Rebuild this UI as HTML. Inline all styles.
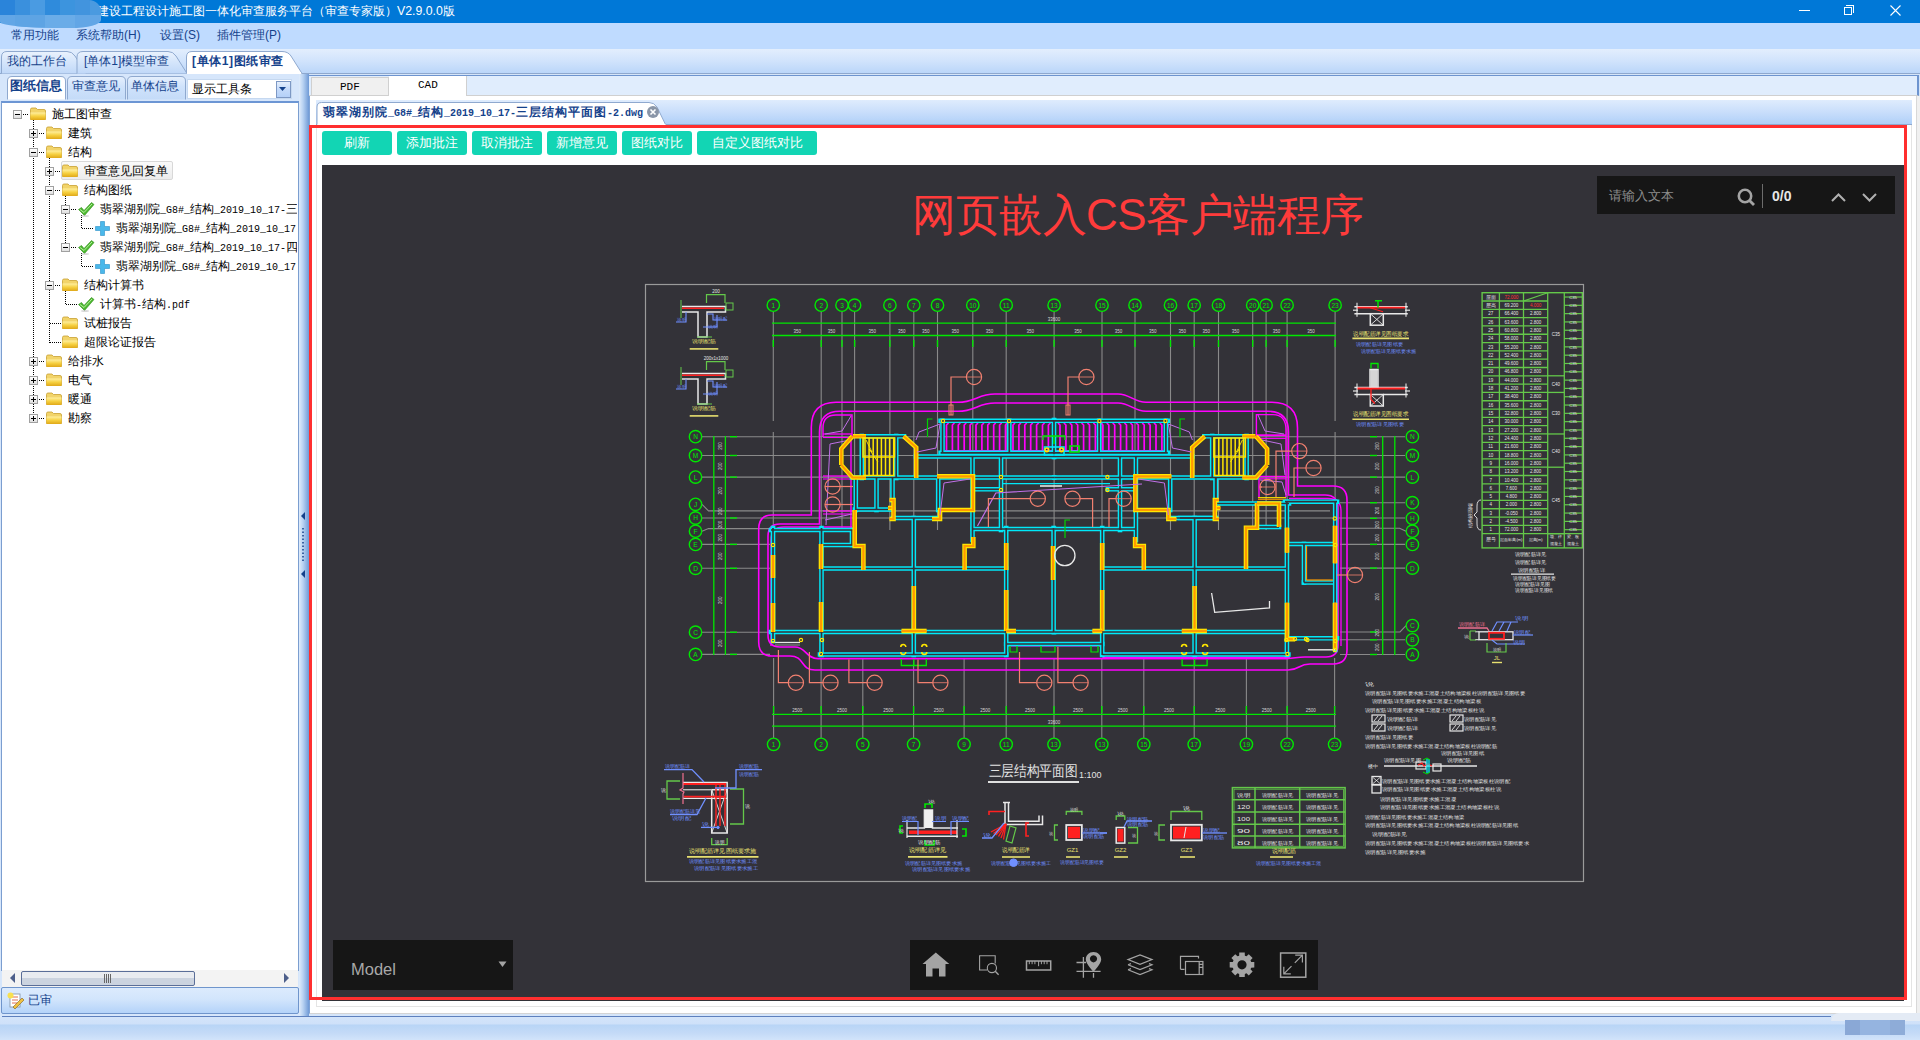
<!DOCTYPE html>
<html><head><meta charset="utf-8">
<style>
*{margin:0;padding:0;box-sizing:border-box}
html,body{width:1920px;height:1040px;overflow:hidden;background:#d5e5f9;font-family:"Liberation Sans",sans-serif;font-size:12px;color:#000}
.a{position:absolute}
.t{position:absolute;white-space:nowrap;line-height:12px}
.bl{color:#15428b}
#title{left:0;top:0;width:1920px;height:23px;background:#0078d7;color:#fff}
#menu{left:0;top:23px;width:1920px;height:26px;background:#bfdbff}
#tabbar{left:0;top:49px;width:1920px;height:25px;background:linear-gradient(#e3eefd,#d2e4fc 45%,#b9d5f9)}
.row{position:absolute;height:19px;left:0;width:296px}
.exp{position:absolute;width:9px;height:9px;border:1px solid #a0a0a0;background:linear-gradient(#fff,#e0e0e0);top:5px}
.exp:before{content:"";position:absolute;left:1px;top:3px;width:5px;height:1px;background:#000}
.exp.p:after{content:"";position:absolute;left:3px;top:1px;width:1px;height:5px;background:#000}
.fold{position:absolute;top:1px;width:16px;height:13px}
.lbl{position:absolute;top:3px;white-space:nowrap;line-height:12px;font-size:12px}
.btn{position:absolute;top:131px;height:24px;background:#12d5b4;border-radius:3px;color:#fff;font-size:13px;line-height:24px;text-align:center}
</style></head>
<body>
<!-- title bar -->
<div id="title" class="a">
  <div class="t" style="left:97px;top:5px;font-size:12.3px;letter-spacing:0px">建设工程设计施工图一体化审查服务平台（审查专家版）V2.9.0.0版</div>
  <div class="a" style="left:0;top:0;width:101px;height:28px;border-radius:0 12px 30px 60px / 0 12px 8px 6px;overflow:hidden;z-index:2">
    <div class="a" style="left:0;top:0;width:15px;height:15px;background:#2a84da"></div>
    <div class="a" style="left:15px;top:0;width:15px;height:15px;background:#3a90dd"></div>
    <div class="a" style="left:30px;top:0;width:15px;height:15px;background:#4a9be2"></div>
    <div class="a" style="left:45px;top:0;width:15px;height:15px;background:#2f8bdc"></div>
    <div class="a" style="left:60px;top:0;width:15px;height:15px;background:#3c94de"></div>
    <div class="a" style="left:75px;top:0;width:15px;height:15px;background:#4294de"></div>
    <div class="a" style="left:90px;top:0;width:11px;height:15px;background:#4a9ae0"></div>
    <div class="a" style="left:0;top:15px;width:101px;height:13px;background:#62a6e6"></div>
    <div class="a" style="left:15px;top:15px;width:30px;height:13px;background:#5ea4e4"></div>
    <div class="a" style="left:45px;top:15px;width:30px;height:13px;background:#6aace8"></div>
  </div>
  <!-- window controls -->
  <div class="a" style="left:1799px;top:10px;width:11px;height:1px;background:#fff"></div>
  <div class="a" style="left:1844px;top:7px;width:8px;height:8px;border:1px solid #fff"></div>
  <div class="a" style="left:1846px;top:5px;width:8px;height:8px;border-top:1px solid #fff;border-right:1px solid #fff"></div>
  <svg class="a" style="left:1890px;top:5px" width="11" height="11"><path d="M0.5 0.5L10.5 10.5M10.5 0.5L0.5 10.5" stroke="#fff" stroke-width="1.1"/></svg>
</div>
<!-- menu -->
<div id="menu" class="a">
  <div class="t bl" style="left:11px;top:6px">常用功能</div>
  <div class="t bl" style="left:76px;top:6px">系统帮助(H)</div>
  <div class="t bl" style="left:160px;top:6px">设置(S)</div>
  <div class="t bl" style="left:217px;top:6px">插件管理(P)</div>
</div>
<div id="tabbar" class="a"></div>
<div class="a" style="left:0;top:73px;width:1920px;height:1px;background:#8ea8ce"></div>
<svg class="a" style="left:0;top:49px" width="310" height="26">
  <defs><linearGradient id="tg" x1="0" y1="0" x2="0" y2="1"><stop offset="0" stop-color="#eaf2fd"/><stop offset="0.5" stop-color="#d4e5fb"/><stop offset="1" stop-color="#c0d8f8"/></linearGradient></defs>
  <path d="M1.5 24.5V8Q1.5 2.5 7 2.5H67Q72 2.5 75 7L86 24.5" fill="url(#tg)" stroke="#8fa9cf"/>
  <path d="M77 24.5V8Q77 2.5 83 2.5H168Q173 2.5 176 7L187 24.5" fill="url(#tg)" stroke="#8fa9cf"/>
  <path d="M186.5 24.5V8Q186.5 2.5 192 2.5H282Q288 2.5 291 7L302 24.5" fill="#fff" stroke="#8fa9cf"/>
  <rect x="187" y="23" width="114" height="3" fill="#fff"/>
</svg>
<div class="t bl" style="left:7px;top:55px">我的工作台</div>
<div class="t bl" style="left:84px;top:55px">[单体1]模型审查</div>
<div class="t bl" style="left:192px;top:55px;font-weight:bold;letter-spacing:0.6px">[单体1]图纸审查</div>

<!-- LEFT PANEL -->
<div class="a" style="left:0;top:74px;width:299px;height:943px;background:#d6e6fb"></div>
<svg class="a" style="left:0;top:74px" width="300" height="30">
  <path d="M7.5 25.5V7Q7.5 2.5 12 2.5H61Q65.5 2.5 65.5 7V25.5" fill="#fff" stroke="#8fa9cf"/>
  <path d="M67.5 25.5V7Q67.5 2.5 72 2.5H121Q125.5 2.5 125.5 7V25.5" fill="url(#tg2)" stroke="#8fa9cf"/>
  <path d="M127.5 25.5V7Q127.5 2.5 132 2.5H181Q185.5 2.5 185.5 7V25.5" fill="url(#tg2)" stroke="#8fa9cf"/>
  <defs><linearGradient id="tg2" x1="0" y1="0" x2="0" y2="1"><stop offset="0" stop-color="#e6f0fd"/><stop offset="0.45" stop-color="#cfe2fb"/><stop offset="1" stop-color="#c4dbf8"/></linearGradient></defs>
</svg>
<div class="t bl" style="left:10px;top:80px;font-weight:bold;font-size:12.5px">图纸信息</div>
<div class="t bl" style="left:72px;top:80px">审查意见</div>
<div class="t bl" style="left:131px;top:80px">单体信息</div>
<div class="a" style="left:187px;top:79px;width:105px;height:20px;background:#fff;border:1px solid #c5d8f0"></div>
<div class="t" style="left:192px;top:83px">显示工具条</div>
<div class="a" style="left:276px;top:81px;width:15px;height:17px;border:1px solid #7d98c4;background:linear-gradient(#e4eefc,#c4dafa 50%,#b4d0f8)"></div>
<svg class="a" style="left:279px;top:87px" width="9" height="5"><path d="M0 0H7L3.5 4Z" fill="#15428b"/></svg>
<!-- tree -->
<div class="a" style="left:1px;top:101px;width:298px;height:870px;background:#fff;border:1px solid #7b9ed0;border-top:2px solid #6c96d4;border-bottom:none"></div>
<div id="tree" class="a" style="left:0;top:104px;width:297px;height:866px;overflow:hidden"><div class="a" style="left:61px;top:57px;width:112px;height:19px;border:1px solid #d8d8d8;border-radius:2px;background:linear-gradient(#fafafa,#ececec)"></div><svg class="a" style="left:0;top:0" width="297" height="400"><defs><linearGradient id="fg" x1="0" y1="0" x2="0" y2="1"><stop offset="0" stop-color="#fff0a0"/><stop offset="0.5" stop-color="#f6d040"/><stop offset="1" stop-color="#e0a818"/></linearGradient></defs><path d="M33.5 16V315" stroke="#000" stroke-width="1" stroke-dasharray="1 1" shape-rendering="crispEdges"/><path d="M49.5 54V239" stroke="#000" stroke-width="1" stroke-dasharray="1 1" shape-rendering="crispEdges"/><path d="M65.5 92V144" stroke="#000" stroke-width="1" stroke-dasharray="1 1" shape-rendering="crispEdges"/><path d="M81.5 111V125" stroke="#000" stroke-width="1" stroke-dasharray="1 1" shape-rendering="crispEdges"/><path d="M81.5 149V163" stroke="#000" stroke-width="1" stroke-dasharray="1 1" shape-rendering="crispEdges"/><path d="M65.5 187V201" stroke="#000" stroke-width="1" stroke-dasharray="1 1" shape-rendering="crispEdges"/><path d="M23 10.5H29" stroke="#000" stroke-width="1" stroke-dasharray="1 1" shape-rendering="crispEdges"/><path d="M39 29.5H45" stroke="#000" stroke-width="1" stroke-dasharray="1 1" shape-rendering="crispEdges"/><path d="M39 48.5H45" stroke="#000" stroke-width="1" stroke-dasharray="1 1" shape-rendering="crispEdges"/><path d="M55 67.5H61" stroke="#000" stroke-width="1" stroke-dasharray="1 1" shape-rendering="crispEdges"/><path d="M55 86.5H61" stroke="#000" stroke-width="1" stroke-dasharray="1 1" shape-rendering="crispEdges"/><path d="M71 105.5H77" stroke="#000" stroke-width="1" stroke-dasharray="1 1" shape-rendering="crispEdges"/><path d="M82 124.5H93" stroke="#000" stroke-width="1" stroke-dasharray="1 1" shape-rendering="crispEdges"/><path d="M71 143.5H77" stroke="#000" stroke-width="1" stroke-dasharray="1 1" shape-rendering="crispEdges"/><path d="M82 162.5H93" stroke="#000" stroke-width="1" stroke-dasharray="1 1" shape-rendering="crispEdges"/><path d="M55 181.5H61" stroke="#000" stroke-width="1" stroke-dasharray="1 1" shape-rendering="crispEdges"/><path d="M66 200.5H77" stroke="#000" stroke-width="1" stroke-dasharray="1 1" shape-rendering="crispEdges"/><path d="M50 219.5H61" stroke="#000" stroke-width="1" stroke-dasharray="1 1" shape-rendering="crispEdges"/><path d="M50 238.5H61" stroke="#000" stroke-width="1" stroke-dasharray="1 1" shape-rendering="crispEdges"/><path d="M39 257.5H45" stroke="#000" stroke-width="1" stroke-dasharray="1 1" shape-rendering="crispEdges"/><path d="M39 276.5H45" stroke="#000" stroke-width="1" stroke-dasharray="1 1" shape-rendering="crispEdges"/><path d="M39 295.5H45" stroke="#000" stroke-width="1" stroke-dasharray="1 1" shape-rendering="crispEdges"/><path d="M39 314.5H45" stroke="#000" stroke-width="1" stroke-dasharray="1 1" shape-rendering="crispEdges"/><g transform="translate(30,3)"><path d="M0.5 2.5Q0.5 1 2 1H6L7.5 2.5H14Q15.5 2.5 15.5 4V12.5H0.5Z" fill="#f2d46a" stroke="#c8a030" stroke-width="0.8"/><path d="M0.5 5.5H15.5V12Q15.5 13 14.5 13H1.5Q0.5 13 0.5 12Z" fill="url(#fg)"/></g><g transform="translate(46,22)"><path d="M0.5 2.5Q0.5 1 2 1H6L7.5 2.5H14Q15.5 2.5 15.5 4V12.5H0.5Z" fill="#f2d46a" stroke="#c8a030" stroke-width="0.8"/><path d="M0.5 5.5H15.5V12Q15.5 13 14.5 13H1.5Q0.5 13 0.5 12Z" fill="url(#fg)"/></g><g transform="translate(46,41)"><path d="M0.5 2.5Q0.5 1 2 1H6L7.5 2.5H14Q15.5 2.5 15.5 4V12.5H0.5Z" fill="#f2d46a" stroke="#c8a030" stroke-width="0.8"/><path d="M0.5 5.5H15.5V12Q15.5 13 14.5 13H1.5Q0.5 13 0.5 12Z" fill="url(#fg)"/></g><g transform="translate(62,60)"><path d="M0.5 2.5Q0.5 1 2 1H6L7.5 2.5H14Q15.5 2.5 15.5 4V12.5H0.5Z" fill="#f2d46a" stroke="#c8a030" stroke-width="0.8"/><path d="M0.5 5.5H15.5V12Q15.5 13 14.5 13H1.5Q0.5 13 0.5 12Z" fill="url(#fg)"/></g><g transform="translate(62,79)"><path d="M0.5 2.5Q0.5 1 2 1H6L7.5 2.5H14Q15.5 2.5 15.5 4V12.5H0.5Z" fill="#f2d46a" stroke="#c8a030" stroke-width="0.8"/><path d="M0.5 5.5H15.5V12Q15.5 13 14.5 13H1.5Q0.5 13 0.5 12Z" fill="url(#fg)"/></g><g transform="translate(78,97)"><path d="M0.5 8.5L3.5 6.5L6 9.5L13.5 1.5L16 3.5L6.5 14.5Z" fill="#4cb830" stroke="#2e8a18" stroke-width="0.6"/><path d="M2 8.5L6 11.5L14 3" stroke="#b8f0a0" stroke-width="1" fill="none"/><ellipse cx="7" cy="15" rx="4" ry="1" fill="#c0c0c0" opacity="0.6"/></g><g transform="translate(95,117)"><path d="M5.5 0.5H9.5V5.5H14.5V9.5H9.5V14.5H5.5V9.5H0.5V5.5H5.5Z" fill="#4ab8ea" stroke="#2a90c8" stroke-width="0.6"/></g><g transform="translate(78,135)"><path d="M0.5 8.5L3.5 6.5L6 9.5L13.5 1.5L16 3.5L6.5 14.5Z" fill="#4cb830" stroke="#2e8a18" stroke-width="0.6"/><path d="M2 8.5L6 11.5L14 3" stroke="#b8f0a0" stroke-width="1" fill="none"/><ellipse cx="7" cy="15" rx="4" ry="1" fill="#c0c0c0" opacity="0.6"/></g><g transform="translate(95,155)"><path d="M5.5 0.5H9.5V5.5H14.5V9.5H9.5V14.5H5.5V9.5H0.5V5.5H5.5Z" fill="#4ab8ea" stroke="#2a90c8" stroke-width="0.6"/></g><g transform="translate(62,174)"><path d="M0.5 2.5Q0.5 1 2 1H6L7.5 2.5H14Q15.5 2.5 15.5 4V12.5H0.5Z" fill="#f2d46a" stroke="#c8a030" stroke-width="0.8"/><path d="M0.5 5.5H15.5V12Q15.5 13 14.5 13H1.5Q0.5 13 0.5 12Z" fill="url(#fg)"/></g><g transform="translate(78,192)"><path d="M0.5 8.5L3.5 6.5L6 9.5L13.5 1.5L16 3.5L6.5 14.5Z" fill="#4cb830" stroke="#2e8a18" stroke-width="0.6"/><path d="M2 8.5L6 11.5L14 3" stroke="#b8f0a0" stroke-width="1" fill="none"/><ellipse cx="7" cy="15" rx="4" ry="1" fill="#c0c0c0" opacity="0.6"/></g><g transform="translate(62,212)"><path d="M0.5 2.5Q0.5 1 2 1H6L7.5 2.5H14Q15.5 2.5 15.5 4V12.5H0.5Z" fill="#f2d46a" stroke="#c8a030" stroke-width="0.8"/><path d="M0.5 5.5H15.5V12Q15.5 13 14.5 13H1.5Q0.5 13 0.5 12Z" fill="url(#fg)"/></g><g transform="translate(62,231)"><path d="M0.5 2.5Q0.5 1 2 1H6L7.5 2.5H14Q15.5 2.5 15.5 4V12.5H0.5Z" fill="#f2d46a" stroke="#c8a030" stroke-width="0.8"/><path d="M0.5 5.5H15.5V12Q15.5 13 14.5 13H1.5Q0.5 13 0.5 12Z" fill="url(#fg)"/></g><g transform="translate(46,250)"><path d="M0.5 2.5Q0.5 1 2 1H6L7.5 2.5H14Q15.5 2.5 15.5 4V12.5H0.5Z" fill="#f2d46a" stroke="#c8a030" stroke-width="0.8"/><path d="M0.5 5.5H15.5V12Q15.5 13 14.5 13H1.5Q0.5 13 0.5 12Z" fill="url(#fg)"/></g><g transform="translate(46,269)"><path d="M0.5 2.5Q0.5 1 2 1H6L7.5 2.5H14Q15.5 2.5 15.5 4V12.5H0.5Z" fill="#f2d46a" stroke="#c8a030" stroke-width="0.8"/><path d="M0.5 5.5H15.5V12Q15.5 13 14.5 13H1.5Q0.5 13 0.5 12Z" fill="url(#fg)"/></g><g transform="translate(46,288)"><path d="M0.5 2.5Q0.5 1 2 1H6L7.5 2.5H14Q15.5 2.5 15.5 4V12.5H0.5Z" fill="#f2d46a" stroke="#c8a030" stroke-width="0.8"/><path d="M0.5 5.5H15.5V12Q15.5 13 14.5 13H1.5Q0.5 13 0.5 12Z" fill="url(#fg)"/></g><g transform="translate(46,307)"><path d="M0.5 2.5Q0.5 1 2 1H6L7.5 2.5H14Q15.5 2.5 15.5 4V12.5H0.5Z" fill="#f2d46a" stroke="#c8a030" stroke-width="0.8"/><path d="M0.5 5.5H15.5V12Q15.5 13 14.5 13H1.5Q0.5 13 0.5 12Z" fill="url(#fg)"/></g></svg>
<div class="exp" style="left:13px;top:6px"></div>
<div class="t" style="left:52px;top:4px">施工图审查</div>
<div class="exp p" style="left:29px;top:25px"></div>
<div class="t" style="left:68px;top:23px">建筑</div>
<div class="exp" style="left:29px;top:44px"></div>
<div class="t" style="left:68px;top:42px">结构</div>
<div class="exp p" style="left:45px;top:63px"></div>
<div class="t" style="left:84px;top:61px">审查意见回复单</div>
<div class="exp" style="left:45px;top:82px"></div>
<div class="t" style="left:84px;top:80px">结构图纸</div>
<div class="exp" style="left:61px;top:101px"></div>
<div class="t" style="left:100px;top:99px">翡翠湖别院<span style="font-family:Liberation Mono,monospace;font-size:10px">_G8#_</span>结构<span style="font-family:Liberation Mono,monospace;font-size:10px">_2019_10_17-</span>三层结构平面图<span style="font-family:Liberation Mono,monospace;font-size:10px">-2.dwg</span></div>
<div class="t" style="left:116px;top:118px">翡翠湖别院<span style="font-family:Liberation Mono,monospace;font-size:10px">_G8#_</span>结构<span style="font-family:Liberation Mono,monospace;font-size:10px">_2019_10_17-</span>三层结构平面图<span style="font-family:Liberation Mono,monospace;font-size:10px">-2</span></div>
<div class="exp" style="left:61px;top:139px"></div>
<div class="t" style="left:100px;top:137px">翡翠湖别院<span style="font-family:Liberation Mono,monospace;font-size:10px">_G8#_</span>结构<span style="font-family:Liberation Mono,monospace;font-size:10px">_2019_10_17-</span>四层结构平面图</div>
<div class="t" style="left:116px;top:156px">翡翠湖别院<span style="font-family:Liberation Mono,monospace;font-size:10px">_G8#_</span>结构<span style="font-family:Liberation Mono,monospace;font-size:10px">_2019_10_17-</span>四层结构平面图</div>
<div class="exp" style="left:45px;top:177px"></div>
<div class="t" style="left:84px;top:175px">结构计算书</div>
<div class="t" style="left:100px;top:194px">计算书<span style="font-family:Liberation Mono,monospace;font-size:10px">-</span>结构<span style="font-family:Liberation Mono,monospace;font-size:10px">.pdf</span></div>
<div class="t" style="left:84px;top:213px">试桩报告</div>
<div class="t" style="left:84px;top:232px">超限论证报告</div>
<div class="exp p" style="left:29px;top:253px"></div>
<div class="t" style="left:68px;top:251px">给排水</div>
<div class="exp p" style="left:29px;top:272px"></div>
<div class="t" style="left:68px;top:270px">电气</div>
<div class="exp p" style="left:29px;top:291px"></div>
<div class="t" style="left:68px;top:289px">暖通</div>
<div class="exp p" style="left:29px;top:310px"></div>
<div class="t" style="left:68px;top:308px">勘察</div></div>
<!-- scrollbar -->
<div class="a" style="left:2px;top:970px;width:296px;height:17px;background:#f3f3f3"></div>
<svg class="a" style="left:9px;top:973px" width="8" height="12"><path d="M6 0V10L1 5Z" fill="#4d5f8a"/></svg>
<svg class="a" style="left:283px;top:973px" width="8" height="12"><path d="M1 0V10L6 5Z" fill="#4d5f8a"/></svg>
<div class="a" style="left:21px;top:971px;width:174px;height:15px;border:1px solid #5a6e98;border-radius:2px;background:linear-gradient(#e8ebf0 50%,#cbd3df 50%)"></div>
<div class="a" style="left:104px;top:974px;width:1px;height:9px;background:#666"></div>
<div class="a" style="left:106px;top:974px;width:1px;height:9px;background:#666"></div>
<div class="a" style="left:108px;top:974px;width:1px;height:9px;background:#666"></div>
<div class="a" style="left:110px;top:974px;width:1px;height:9px;background:#666"></div>
<!-- 已审 -->
<div class="a" style="left:1px;top:987px;width:298px;height:27px;background:linear-gradient(#dcebfd,#d2e5fc 45%,#b4d3f9);border:1px solid #6f95cc;border-radius:2px"></div>
<svg class="a" style="left:7px;top:992px" width="17" height="17">
  <rect x="3" y="2" width="10" height="13" fill="#fff" stroke="#8090a0" stroke-width="0.8"/>
  <path d="M5 5H11M5 8H11M5 11H10" stroke="#e07050" stroke-width="1"/>
  <path d="M6 15L15 6L17 8L8 17Z" fill="#f0c040" stroke="#806020" stroke-width="0.6"/>
  <circle cx="3.5" cy="3.5" r="3" fill="#f8e050"/>
</svg>
<div class="t bl" style="left:28px;top:994px">已审</div>
<!-- splitter -->
<div class="a" style="left:299px;top:74px;width:10px;height:942px;background:linear-gradient(90deg,#e0ecfb,#b8d2f2 40%,#6f9ad6)"></div>
<svg class="a" style="left:300px;top:510px" width="6" height="70">
  <path d="M5 2V10L1 6Z" fill="#15428b"/>
  <path d="M3 18V52" stroke="#15428b" stroke-width="1.5" stroke-dasharray="1.5 2"/>
  <path d="M5 60V68L1 64Z" fill="#15428b"/>
</svg>

<!-- RIGHT PANEL -->
<div class="a" style="left:309px;top:75px;width:1609px;height:939px;background:#fff;border-left:1px solid #7fa3d6;border-bottom:1px solid #d4d4d4"></div>
<div class="a" style="left:309px;top:75px;width:1610px;height:21px;background:#e0edfd;border-top:1px solid #6d94cf;border-right:2px solid #6d94cf;border-bottom:1px solid #d0d0d0"></div>
<div class="a" style="left:311px;top:77px;width:78px;height:18px;background:#f0f0f0;border:1px solid #d0d0d0;border-bottom:none"></div>
<div class="a" style="left:389px;top:76px;width:78px;height:20px;background:#fff;border-right:1px solid #d0d0d0"></div>
<div class="t" style="left:340px;top:81px;font-family:'Liberation Mono',monospace;font-size:11px">PDF</div>
<div class="t" style="left:418px;top:79px;font-family:'Liberation Mono',monospace;font-size:11px">CAD</div>
<div class="a" style="left:1916px;top:96px;width:1px;height:920px;background:#d8d8d8"></div>
<!-- file tab strip -->
<div class="a" style="left:316px;top:100px;width:1596px;height:25px;background:linear-gradient(#dfecfd,#c9defb 50%,#b0d0f8);border-bottom:1px solid #8fa9cf"></div>
<svg class="a" style="left:316px;top:101px" width="360" height="25">
  <path d="M1 24.5V6Q1 1.5 5.5 1.5H333Q338 1.5 341 6L350 24.5" fill="#fff" stroke="#8fa9cf"/>
  <rect x="1.5" y="23" width="348" height="3" fill="#fff"/>
</svg>
<div class="t bl" style="left:323px;top:106px;font-weight:bold;letter-spacing:1px">翡翠湖别院<span style="font-family:Liberation Mono,monospace;font-size:10px;letter-spacing:0">_G8#_</span>结构<span style="font-family:Liberation Mono,monospace;font-size:10px;letter-spacing:0">_2019_10_17-</span>三层结构平面图<span style="font-family:Liberation Mono,monospace;font-size:10px;letter-spacing:0">-2.dwg</span></div>
<svg class="a" style="left:646px;top:105px" width="14" height="14"><circle cx="7" cy="7" r="6" fill="#8a96a8"/><path d="M4.5 4.5L9.5 9.5M9.5 4.5L4.5 9.5" stroke="#fff" stroke-width="1.6"/></svg>
<!-- inner frame lines -->
<div class="a" style="left:316px;top:125px;width:1596px;height:882px;border:1px solid #e4e4e4;border-top:none"></div>
<!-- buttons -->
<div class="btn" style="left:322px;width:70px">刷新</div>
<div class="btn" style="left:397px;width:70px">添加批注</div>
<div class="btn" style="left:472px;width:70px">取消批注</div>
<div class="btn" style="left:547px;width:70px">新增意见</div>
<div class="btn" style="left:622px;width:70px">图纸对比</div>
<div class="btn" style="left:697px;width:120px">自定义图纸对比</div>
<!-- canvas -->
<div id="canvas" class="a" style="left:322px;top:165px;width:1582px;height:836px;background:#333238;overflow:hidden"><div class="a" style="left:-322px;top:-165px;width:1920px;height:1040px">
<svg class="a" style="left:0;top:0" width="1920" height="1040" font-family="Liberation Sans, sans-serif"><rect x="645.5" y="284.5" width="938" height="597" stroke="#9a9a9a" stroke-width="1.2" fill="none"/>
<path d="M773.3 311.5L773.3 421" stroke="#8a8a8a" stroke-width="1.1"/>
<path d="M773.3 432L773.3 530" stroke="#8a8a8a" stroke-width="1.1"/>
<path d="M821.2 311.5L821.2 530" stroke="#8a8a8a" stroke-width="1.1"/>
<path d="M842 311.5L842 530" stroke="#8a8a8a" stroke-width="1.1"/>
<path d="M854.6 311.5L854.6 530" stroke="#8a8a8a" stroke-width="1.1"/>
<path d="M889.9 311.5L889.9 530" stroke="#8a8a8a" stroke-width="1.1"/>
<path d="M913.8 311.5L913.8 530" stroke="#8a8a8a" stroke-width="1.1"/>
<path d="M937.5 311.5L937.5 530" stroke="#8a8a8a" stroke-width="1.1"/>
<path d="M972.8 311.5L972.8 530" stroke="#8a8a8a" stroke-width="1.1"/>
<path d="M1006.2 311.5L1006.2 530" stroke="#8a8a8a" stroke-width="1.1"/>
<path d="M1054.1 311.5L1054.1 530" stroke="#8a8a8a" stroke-width="1.1"/>
<path d="M1102 311.5L1102 530" stroke="#8a8a8a" stroke-width="1.1"/>
<path d="M1135 311.5L1135 530" stroke="#8a8a8a" stroke-width="1.1"/>
<path d="M1170.5 311.5L1170.5 530" stroke="#8a8a8a" stroke-width="1.1"/>
<path d="M1194.2 311.5L1194.2 530" stroke="#8a8a8a" stroke-width="1.1"/>
<path d="M1218.5 311.5L1218.5 530" stroke="#8a8a8a" stroke-width="1.1"/>
<path d="M1252.7 311.5L1252.7 530" stroke="#8a8a8a" stroke-width="1.1"/>
<path d="M1266.1 311.5L1266.1 530" stroke="#8a8a8a" stroke-width="1.1"/>
<path d="M1287.1 311.5L1287.1 530" stroke="#8a8a8a" stroke-width="1.1"/>
<path d="M1335.1 311.5L1335.1 421" stroke="#8a8a8a" stroke-width="1.1"/>
<path d="M1335.1 432L1335.1 530" stroke="#8a8a8a" stroke-width="1.1"/>
<path d="M773.6 658L773.6 738" stroke="#8a8a8a" stroke-width="1.1"/>
<path d="M821.1 658L821.1 738" stroke="#8a8a8a" stroke-width="1.1"/>
<path d="M862.8 658L862.8 738" stroke="#8a8a8a" stroke-width="1.1"/>
<path d="M913.6 658L913.6 738" stroke="#8a8a8a" stroke-width="1.1"/>
<path d="M964.1 658L964.1 738" stroke="#8a8a8a" stroke-width="1.1"/>
<path d="M1006.2 658L1006.2 738" stroke="#8a8a8a" stroke-width="1.1"/>
<path d="M1054 658L1054 738" stroke="#8a8a8a" stroke-width="1.1"/>
<path d="M1101.8 658L1101.8 738" stroke="#8a8a8a" stroke-width="1.1"/>
<path d="M1143.8 658L1143.8 738" stroke="#8a8a8a" stroke-width="1.1"/>
<path d="M1194.2 658L1194.2 738" stroke="#8a8a8a" stroke-width="1.1"/>
<path d="M1246.4 658L1246.4 738" stroke="#8a8a8a" stroke-width="1.1"/>
<path d="M1287.1 658L1287.1 738" stroke="#8a8a8a" stroke-width="1.1"/>
<path d="M1334.6 658L1334.6 738" stroke="#8a8a8a" stroke-width="1.1"/>
<path d="M702 436.7L1405 436.7" stroke="#8a8a8a" stroke-width="1.1"/>
<path d="M702 455.5L1405 455.5" stroke="#8a8a8a" stroke-width="1.1"/>
<path d="M702 477.1L1405 477.1" stroke="#8a8a8a" stroke-width="1.1"/>
<path d="M702 504.3L708.5 510.9H1330" stroke="#8a8a8a" stroke-width="1.1" fill="none"/>
<path d="M702 518L1405 518" stroke="#8a8a8a" stroke-width="1.1"/>
<path d="M702 531.2L708.5 528.6H770" stroke="#8a8a8a" stroke-width="1.1" fill="none"/>
<path d="M702 544.4L770 544.4" stroke="#8a8a8a" stroke-width="1.1"/>
<path d="M702 568.3L770 568.3" stroke="#8a8a8a" stroke-width="1.1"/>
<path d="M702 632.2L770 632.2" stroke="#8a8a8a" stroke-width="1.1"/>
<path d="M702 654.4L770 654.4" stroke="#8a8a8a" stroke-width="1.1"/>
<path d="M1340 502.7L1405 502.7" stroke="#8a8a8a" stroke-width="1.1"/>
<path d="M1340 528.2H1399.7L1406 531.2" stroke="#8a8a8a" stroke-width="1.1" fill="none"/>
<path d="M1340 632H1400L1406 625.6" stroke="#8a8a8a" stroke-width="1.1" fill="none"/>
<path d="M1340 544.4L1405 544.4" stroke="#8a8a8a" stroke-width="1.1"/>
<path d="M1340 568.1L1405 568.1" stroke="#8a8a8a" stroke-width="1.1"/>
<path d="M1340 639.8L1405 639.8" stroke="#8a8a8a" stroke-width="1.1"/>
<path d="M1340 654.5L1405 654.5" stroke="#8a8a8a" stroke-width="1.1"/>
<circle cx="773.3" cy="305.2" r="6.2" stroke="#00e800" stroke-width="1.4" fill="none"/>
<text x="773.3" y="307.6" fill="#00e800" font-size="6.5" text-anchor="middle">1</text>
<circle cx="821.2" cy="305.2" r="6.2" stroke="#00e800" stroke-width="1.4" fill="none"/>
<text x="821.2" y="307.6" fill="#00e800" font-size="6.5" text-anchor="middle">2</text>
<circle cx="842" cy="305.2" r="6.2" stroke="#00e800" stroke-width="1.4" fill="none"/>
<text x="842" y="307.6" fill="#00e800" font-size="6.5" text-anchor="middle">3</text>
<circle cx="854.6" cy="305.2" r="6.2" stroke="#00e800" stroke-width="1.4" fill="none"/>
<text x="854.6" y="307.6" fill="#00e800" font-size="6.5" text-anchor="middle">4</text>
<circle cx="889.9" cy="305.2" r="6.2" stroke="#00e800" stroke-width="1.4" fill="none"/>
<text x="889.9" y="307.6" fill="#00e800" font-size="6.5" text-anchor="middle">6</text>
<circle cx="913.8" cy="305.2" r="6.2" stroke="#00e800" stroke-width="1.4" fill="none"/>
<text x="913.8" y="307.6" fill="#00e800" font-size="6.5" text-anchor="middle">7</text>
<circle cx="937.5" cy="305.2" r="6.2" stroke="#00e800" stroke-width="1.4" fill="none"/>
<text x="937.5" y="307.6" fill="#00e800" font-size="6.5" text-anchor="middle">8</text>
<circle cx="972.8" cy="305.2" r="6.2" stroke="#00e800" stroke-width="1.4" fill="none"/>
<text x="972.8" y="307.6" fill="#00e800" font-size="6.5" text-anchor="middle">10</text>
<circle cx="1006.2" cy="305.2" r="6.2" stroke="#00e800" stroke-width="1.4" fill="none"/>
<text x="1006.2" y="307.6" fill="#00e800" font-size="6.5" text-anchor="middle">11</text>
<circle cx="1054.1" cy="305.2" r="6.2" stroke="#00e800" stroke-width="1.4" fill="none"/>
<text x="1054.1" y="307.6" fill="#00e800" font-size="6.5" text-anchor="middle">13</text>
<circle cx="1102" cy="305.2" r="6.2" stroke="#00e800" stroke-width="1.4" fill="none"/>
<text x="1102" y="307.6" fill="#00e800" font-size="6.5" text-anchor="middle">15</text>
<circle cx="1135" cy="305.2" r="6.2" stroke="#00e800" stroke-width="1.4" fill="none"/>
<text x="1135" y="307.6" fill="#00e800" font-size="6.5" text-anchor="middle">14</text>
<circle cx="1170.5" cy="305.2" r="6.2" stroke="#00e800" stroke-width="1.4" fill="none"/>
<text x="1170.5" y="307.6" fill="#00e800" font-size="6.5" text-anchor="middle">16</text>
<circle cx="1194.2" cy="305.2" r="6.2" stroke="#00e800" stroke-width="1.4" fill="none"/>
<text x="1194.2" y="307.6" fill="#00e800" font-size="6.5" text-anchor="middle">17</text>
<circle cx="1218.5" cy="305.2" r="6.2" stroke="#00e800" stroke-width="1.4" fill="none"/>
<text x="1218.5" y="307.6" fill="#00e800" font-size="6.5" text-anchor="middle">18</text>
<circle cx="1252.7" cy="305.2" r="6.2" stroke="#00e800" stroke-width="1.4" fill="none"/>
<text x="1252.7" y="307.6" fill="#00e800" font-size="6.5" text-anchor="middle">20</text>
<circle cx="1266.1" cy="305.2" r="6.2" stroke="#00e800" stroke-width="1.4" fill="none"/>
<text x="1266.1" y="307.6" fill="#00e800" font-size="6.5" text-anchor="middle">21</text>
<circle cx="1287.1" cy="305.2" r="6.2" stroke="#00e800" stroke-width="1.4" fill="none"/>
<text x="1287.1" y="307.6" fill="#00e800" font-size="6.5" text-anchor="middle">22</text>
<circle cx="1335.1" cy="305.2" r="6.2" stroke="#00e800" stroke-width="1.4" fill="none"/>
<text x="1335.1" y="307.6" fill="#00e800" font-size="6.5" text-anchor="middle">23</text>
<circle cx="773.6" cy="744.3" r="6.2" stroke="#00e800" stroke-width="1.4" fill="none"/>
<text x="773.6" y="746.7" fill="#00e800" font-size="6.5" text-anchor="middle">1</text>
<circle cx="821.1" cy="744.3" r="6.2" stroke="#00e800" stroke-width="1.4" fill="none"/>
<text x="821.1" y="746.7" fill="#00e800" font-size="6.5" text-anchor="middle">2</text>
<circle cx="862.8" cy="744.3" r="6.2" stroke="#00e800" stroke-width="1.4" fill="none"/>
<text x="862.8" y="746.7" fill="#00e800" font-size="6.5" text-anchor="middle">5</text>
<circle cx="913.6" cy="744.3" r="6.2" stroke="#00e800" stroke-width="1.4" fill="none"/>
<text x="913.6" y="746.7" fill="#00e800" font-size="6.5" text-anchor="middle">7</text>
<circle cx="964.1" cy="744.3" r="6.2" stroke="#00e800" stroke-width="1.4" fill="none"/>
<text x="964.1" y="746.7" fill="#00e800" font-size="6.5" text-anchor="middle">9</text>
<circle cx="1006.2" cy="744.3" r="6.2" stroke="#00e800" stroke-width="1.4" fill="none"/>
<text x="1006.2" y="746.7" fill="#00e800" font-size="6.5" text-anchor="middle">11</text>
<circle cx="1054" cy="744.3" r="6.2" stroke="#00e800" stroke-width="1.4" fill="none"/>
<text x="1054" y="746.7" fill="#00e800" font-size="6.5" text-anchor="middle">13</text>
<circle cx="1101.8" cy="744.3" r="6.2" stroke="#00e800" stroke-width="1.4" fill="none"/>
<text x="1101.8" y="746.7" fill="#00e800" font-size="6.5" text-anchor="middle">13</text>
<circle cx="1143.8" cy="744.3" r="6.2" stroke="#00e800" stroke-width="1.4" fill="none"/>
<text x="1143.8" y="746.7" fill="#00e800" font-size="6.5" text-anchor="middle">15</text>
<circle cx="1194.2" cy="744.3" r="6.2" stroke="#00e800" stroke-width="1.4" fill="none"/>
<text x="1194.2" y="746.7" fill="#00e800" font-size="6.5" text-anchor="middle">17</text>
<circle cx="1246.4" cy="744.3" r="6.2" stroke="#00e800" stroke-width="1.4" fill="none"/>
<text x="1246.4" y="746.7" fill="#00e800" font-size="6.5" text-anchor="middle">19</text>
<circle cx="1287.1" cy="744.3" r="6.2" stroke="#00e800" stroke-width="1.4" fill="none"/>
<text x="1287.1" y="746.7" fill="#00e800" font-size="6.5" text-anchor="middle">22</text>
<circle cx="1334.6" cy="744.3" r="6.2" stroke="#00e800" stroke-width="1.4" fill="none"/>
<text x="1334.6" y="746.7" fill="#00e800" font-size="6.5" text-anchor="middle">23</text>
<circle cx="695.5" cy="436.7" r="6.2" stroke="#00e800" stroke-width="1.4" fill="none"/>
<text x="695.5" y="439.09999999999997" fill="#00e800" font-size="6.5" text-anchor="middle">N</text>
<circle cx="695.5" cy="455.5" r="6.2" stroke="#00e800" stroke-width="1.4" fill="none"/>
<text x="695.5" y="457.9" fill="#00e800" font-size="6.5" text-anchor="middle">M</text>
<circle cx="695.5" cy="477.1" r="6.2" stroke="#00e800" stroke-width="1.4" fill="none"/>
<text x="695.5" y="479.5" fill="#00e800" font-size="6.5" text-anchor="middle">L</text>
<circle cx="695.5" cy="504.3" r="6.2" stroke="#00e800" stroke-width="1.4" fill="none"/>
<text x="695.5" y="506.7" fill="#00e800" font-size="6.5" text-anchor="middle">J</text>
<circle cx="695.5" cy="518" r="6.2" stroke="#00e800" stroke-width="1.4" fill="none"/>
<text x="695.5" y="520.4" fill="#00e800" font-size="6.5" text-anchor="middle">H</text>
<circle cx="695.5" cy="531.2" r="6.2" stroke="#00e800" stroke-width="1.4" fill="none"/>
<text x="695.5" y="533.6" fill="#00e800" font-size="6.5" text-anchor="middle">F</text>
<circle cx="695.5" cy="544.4" r="6.2" stroke="#00e800" stroke-width="1.4" fill="none"/>
<text x="695.5" y="546.8" fill="#00e800" font-size="6.5" text-anchor="middle">E</text>
<circle cx="695.5" cy="568.3" r="6.2" stroke="#00e800" stroke-width="1.4" fill="none"/>
<text x="695.5" y="570.6999999999999" fill="#00e800" font-size="6.5" text-anchor="middle">D</text>
<circle cx="695.5" cy="632.2" r="6.2" stroke="#00e800" stroke-width="1.4" fill="none"/>
<text x="695.5" y="634.6" fill="#00e800" font-size="6.5" text-anchor="middle">C</text>
<circle cx="695.5" cy="654.4" r="6.2" stroke="#00e800" stroke-width="1.4" fill="none"/>
<text x="695.5" y="656.8" fill="#00e800" font-size="6.5" text-anchor="middle">A</text>
<circle cx="1412.4" cy="436.7" r="6.2" stroke="#00e800" stroke-width="1.4" fill="none"/>
<text x="1412.4" y="439.09999999999997" fill="#00e800" font-size="6.5" text-anchor="middle">N</text>
<circle cx="1412.4" cy="455.5" r="6.2" stroke="#00e800" stroke-width="1.4" fill="none"/>
<text x="1412.4" y="457.9" fill="#00e800" font-size="6.5" text-anchor="middle">M</text>
<circle cx="1412.4" cy="477.1" r="6.2" stroke="#00e800" stroke-width="1.4" fill="none"/>
<text x="1412.4" y="479.5" fill="#00e800" font-size="6.5" text-anchor="middle">L</text>
<circle cx="1412.4" cy="502.7" r="6.2" stroke="#00e800" stroke-width="1.4" fill="none"/>
<text x="1412.4" y="505.09999999999997" fill="#00e800" font-size="6.5" text-anchor="middle">K</text>
<circle cx="1412.4" cy="518.3" r="6.2" stroke="#00e800" stroke-width="1.4" fill="none"/>
<text x="1412.4" y="520.6999999999999" fill="#00e800" font-size="6.5" text-anchor="middle">H</text>
<circle cx="1412.4" cy="531.2" r="6.2" stroke="#00e800" stroke-width="1.4" fill="none"/>
<text x="1412.4" y="533.6" fill="#00e800" font-size="6.5" text-anchor="middle">F</text>
<circle cx="1412.4" cy="544.4" r="6.2" stroke="#00e800" stroke-width="1.4" fill="none"/>
<text x="1412.4" y="546.8" fill="#00e800" font-size="6.5" text-anchor="middle">E</text>
<circle cx="1412.4" cy="568.1" r="6.2" stroke="#00e800" stroke-width="1.4" fill="none"/>
<text x="1412.4" y="570.5" fill="#00e800" font-size="6.5" text-anchor="middle">D</text>
<circle cx="1412.4" cy="625.6" r="6.2" stroke="#00e800" stroke-width="1.4" fill="none"/>
<text x="1412.4" y="628.0" fill="#00e800" font-size="6.5" text-anchor="middle">C</text>
<circle cx="1412.4" cy="639.8" r="6.2" stroke="#00e800" stroke-width="1.4" fill="none"/>
<text x="1412.4" y="642.1999999999999" fill="#00e800" font-size="6.5" text-anchor="middle">B</text>
<circle cx="1412.4" cy="654.5" r="6.2" stroke="#00e800" stroke-width="1.4" fill="none"/>
<text x="1412.4" y="656.9" fill="#00e800" font-size="6.5" text-anchor="middle">A</text>
<path d="M772 323.2L1336 323.2" stroke="#00e800" stroke-width="1.3"/>
<path d="M772 335.5L1336 335.5" stroke="#00e800" stroke-width="1.3"/>
<path d="M772 714.3L1336 714.3" stroke="#00e800" stroke-width="1.3"/>
<path d="M772 726.1L1336 726.1" stroke="#00e800" stroke-width="1.3"/>
<path d="M713.8 436L713.8 655" stroke="#00e800" stroke-width="1.3"/>
<path d="M725.4 436L725.4 655" stroke="#00e800" stroke-width="1.3"/>
<path d="M1382.7 436L1382.7 655" stroke="#00e800" stroke-width="1.3"/>
<path d="M1394.8 436L1394.8 655" stroke="#00e800" stroke-width="1.3"/>
<path d="M773.3 340L773.3 347" stroke="#00e800" stroke-width="1.4"/>
<path d="M821.2 340L821.2 347" stroke="#00e800" stroke-width="1.4"/>
<path d="M842 340L842 347" stroke="#00e800" stroke-width="1.4"/>
<path d="M854.6 340L854.6 347" stroke="#00e800" stroke-width="1.4"/>
<path d="M889.9 340L889.9 347" stroke="#00e800" stroke-width="1.4"/>
<path d="M913.8 340L913.8 347" stroke="#00e800" stroke-width="1.4"/>
<path d="M937.5 340L937.5 347" stroke="#00e800" stroke-width="1.4"/>
<path d="M972.8 340L972.8 347" stroke="#00e800" stroke-width="1.4"/>
<path d="M1006.2 340L1006.2 347" stroke="#00e800" stroke-width="1.4"/>
<path d="M1054.1 340L1054.1 347" stroke="#00e800" stroke-width="1.4"/>
<path d="M1102 340L1102 347" stroke="#00e800" stroke-width="1.4"/>
<path d="M1135 340L1135 347" stroke="#00e800" stroke-width="1.4"/>
<path d="M1170.5 340L1170.5 347" stroke="#00e800" stroke-width="1.4"/>
<path d="M1194.2 340L1194.2 347" stroke="#00e800" stroke-width="1.4"/>
<path d="M1218.5 340L1218.5 347" stroke="#00e800" stroke-width="1.4"/>
<path d="M1252.7 340L1252.7 347" stroke="#00e800" stroke-width="1.4"/>
<path d="M1266.1 340L1266.1 347" stroke="#00e800" stroke-width="1.4"/>
<path d="M1287.1 340L1287.1 347" stroke="#00e800" stroke-width="1.4"/>
<path d="M1335.1 340L1335.1 347" stroke="#00e800" stroke-width="1.4"/>
<path d="M773.6 706L773.6 713" stroke="#00e800" stroke-width="1.4"/>
<path d="M821.1 706L821.1 713" stroke="#00e800" stroke-width="1.4"/>
<path d="M862.8 706L862.8 713" stroke="#00e800" stroke-width="1.4"/>
<path d="M913.6 706L913.6 713" stroke="#00e800" stroke-width="1.4"/>
<path d="M964.1 706L964.1 713" stroke="#00e800" stroke-width="1.4"/>
<path d="M1006.2 706L1006.2 713" stroke="#00e800" stroke-width="1.4"/>
<path d="M1054 706L1054 713" stroke="#00e800" stroke-width="1.4"/>
<path d="M1101.8 706L1101.8 713" stroke="#00e800" stroke-width="1.4"/>
<path d="M1143.8 706L1143.8 713" stroke="#00e800" stroke-width="1.4"/>
<path d="M1194.2 706L1194.2 713" stroke="#00e800" stroke-width="1.4"/>
<path d="M1246.4 706L1246.4 713" stroke="#00e800" stroke-width="1.4"/>
<path d="M1287.1 706L1287.1 713" stroke="#00e800" stroke-width="1.4"/>
<path d="M1334.6 706L1334.6 713" stroke="#00e800" stroke-width="1.4"/>
<path d="M730 436.7L737 436.7" stroke="#00e800" stroke-width="1.4"/>
<path d="M730 455.5L737 455.5" stroke="#00e800" stroke-width="1.4"/>
<path d="M730 477.1L737 477.1" stroke="#00e800" stroke-width="1.4"/>
<path d="M730 518L737 518" stroke="#00e800" stroke-width="1.4"/>
<path d="M730 544.4L737 544.4" stroke="#00e800" stroke-width="1.4"/>
<path d="M730 568.3L737 568.3" stroke="#00e800" stroke-width="1.4"/>
<path d="M730 632.2L737 632.2" stroke="#00e800" stroke-width="1.4"/>
<path d="M730 654.4L737 654.4" stroke="#00e800" stroke-width="1.4"/>
<path d="M1370 436.7L1377 436.7" stroke="#00e800" stroke-width="1.4"/>
<path d="M1370 455.5L1377 455.5" stroke="#00e800" stroke-width="1.4"/>
<path d="M1370 477.1L1377 477.1" stroke="#00e800" stroke-width="1.4"/>
<path d="M1370 502.7L1377 502.7" stroke="#00e800" stroke-width="1.4"/>
<path d="M1370 518.3L1377 518.3" stroke="#00e800" stroke-width="1.4"/>
<path d="M1370 544.4L1377 544.4" stroke="#00e800" stroke-width="1.4"/>
<path d="M1370 568.1L1377 568.1" stroke="#00e800" stroke-width="1.4"/>
<path d="M1370 632L1377 632" stroke="#00e800" stroke-width="1.4"/>
<path d="M1370 639.8L1377 639.8" stroke="#00e800" stroke-width="1.4"/>
<path d="M1370 654.5L1377 654.5" stroke="#00e800" stroke-width="1.4"/>
<text x="797.25" y="333" fill="#d8d8d8" font-size="4.5" text-anchor="middle">350</text>
<text x="831.6" y="333" fill="#d8d8d8" font-size="4.5" text-anchor="middle">350</text>
<text x="872.25" y="333" fill="#d8d8d8" font-size="4.5" text-anchor="middle">350</text>
<text x="901.8499999999999" y="333" fill="#d8d8d8" font-size="4.5" text-anchor="middle">350</text>
<text x="925.65" y="333" fill="#d8d8d8" font-size="4.5" text-anchor="middle">350</text>
<text x="955.15" y="333" fill="#d8d8d8" font-size="4.5" text-anchor="middle">350</text>
<text x="989.5" y="333" fill="#d8d8d8" font-size="4.5" text-anchor="middle">350</text>
<text x="1030.15" y="333" fill="#d8d8d8" font-size="4.5" text-anchor="middle">350</text>
<text x="1078.05" y="333" fill="#d8d8d8" font-size="4.5" text-anchor="middle">350</text>
<text x="1118.5" y="333" fill="#d8d8d8" font-size="4.5" text-anchor="middle">350</text>
<text x="1152.75" y="333" fill="#d8d8d8" font-size="4.5" text-anchor="middle">350</text>
<text x="1182.35" y="333" fill="#d8d8d8" font-size="4.5" text-anchor="middle">350</text>
<text x="1206.35" y="333" fill="#d8d8d8" font-size="4.5" text-anchor="middle">350</text>
<text x="1235.6" y="333" fill="#d8d8d8" font-size="4.5" text-anchor="middle">350</text>
<text x="1276.6" y="333" fill="#d8d8d8" font-size="4.5" text-anchor="middle">350</text>
<text x="1311.1" y="333" fill="#d8d8d8" font-size="4.5" text-anchor="middle">350</text>
<text x="797.35" y="712" fill="#d8d8d8" font-size="4.5" text-anchor="middle">2500</text>
<text x="841.95" y="712" fill="#d8d8d8" font-size="4.5" text-anchor="middle">2500</text>
<text x="888.2" y="712" fill="#d8d8d8" font-size="4.5" text-anchor="middle">2500</text>
<text x="938.85" y="712" fill="#d8d8d8" font-size="4.5" text-anchor="middle">2500</text>
<text x="985.1500000000001" y="712" fill="#d8d8d8" font-size="4.5" text-anchor="middle">2500</text>
<text x="1030.1" y="712" fill="#d8d8d8" font-size="4.5" text-anchor="middle">2500</text>
<text x="1077.9" y="712" fill="#d8d8d8" font-size="4.5" text-anchor="middle">2500</text>
<text x="1122.8" y="712" fill="#d8d8d8" font-size="4.5" text-anchor="middle">2500</text>
<text x="1169.0" y="712" fill="#d8d8d8" font-size="4.5" text-anchor="middle">2500</text>
<text x="1220.3000000000002" y="712" fill="#d8d8d8" font-size="4.5" text-anchor="middle">2500</text>
<text x="1266.75" y="712" fill="#d8d8d8" font-size="4.5" text-anchor="middle">2500</text>
<text x="1310.85" y="712" fill="#d8d8d8" font-size="4.5" text-anchor="middle">2500</text>
<text x="1054" y="321" fill="#d8d8d8" font-size="4.5" text-anchor="middle">33600</text>
<text x="1054" y="724" fill="#d8d8d8" font-size="4.5" text-anchor="middle">33600</text>
<text x="0" y="0" fill="#d8d8d8" font-size="4.5" text-anchor="middle" transform="translate(722,446.1) rotate(-90)">200</text>
<text x="0" y="0" fill="#d8d8d8" font-size="4.5" text-anchor="middle" transform="translate(722,466.3) rotate(-90)">200</text>
<text x="0" y="0" fill="#d8d8d8" font-size="4.5" text-anchor="middle" transform="translate(722,490.70000000000005) rotate(-90)">200</text>
<text x="0" y="0" fill="#d8d8d8" font-size="4.5" text-anchor="middle" transform="translate(722,511.15) rotate(-90)">200</text>
<text x="0" y="0" fill="#d8d8d8" font-size="4.5" text-anchor="middle" transform="translate(722,524.6) rotate(-90)">200</text>
<text x="0" y="0" fill="#d8d8d8" font-size="4.5" text-anchor="middle" transform="translate(722,537.8) rotate(-90)">200</text>
<text x="0" y="0" fill="#d8d8d8" font-size="4.5" text-anchor="middle" transform="translate(722,556.3499999999999) rotate(-90)">200</text>
<text x="0" y="0" fill="#d8d8d8" font-size="4.5" text-anchor="middle" transform="translate(722,600.25) rotate(-90)">200</text>
<text x="0" y="0" fill="#d8d8d8" font-size="4.5" text-anchor="middle" transform="translate(722,643.3) rotate(-90)">200</text>
<text x="0" y="0" fill="#d8d8d8" font-size="4.5" text-anchor="middle" transform="translate(1379,446.1) rotate(-90)">200</text>
<text x="0" y="0" fill="#d8d8d8" font-size="4.5" text-anchor="middle" transform="translate(1379,466.3) rotate(-90)">200</text>
<text x="0" y="0" fill="#d8d8d8" font-size="4.5" text-anchor="middle" transform="translate(1379,489.9) rotate(-90)">200</text>
<text x="0" y="0" fill="#d8d8d8" font-size="4.5" text-anchor="middle" transform="translate(1379,510.5) rotate(-90)">200</text>
<text x="0" y="0" fill="#d8d8d8" font-size="4.5" text-anchor="middle" transform="translate(1379,524.75) rotate(-90)">200</text>
<text x="0" y="0" fill="#d8d8d8" font-size="4.5" text-anchor="middle" transform="translate(1379,537.8) rotate(-90)">200</text>
<text x="0" y="0" fill="#d8d8d8" font-size="4.5" text-anchor="middle" transform="translate(1379,556.25) rotate(-90)">200</text>
<text x="0" y="0" fill="#d8d8d8" font-size="4.5" text-anchor="middle" transform="translate(1379,596.85) rotate(-90)">200</text>
<text x="0" y="0" fill="#d8d8d8" font-size="4.5" text-anchor="middle" transform="translate(1379,632.7) rotate(-90)">200</text>
<text x="0" y="0" fill="#d8d8d8" font-size="4.5" text-anchor="middle" transform="translate(1379,647.15) rotate(-90)">200</text>
<path d="M811.3 515V427.6Q811.3 402.3 836 402.3H958C975 402.3 978 394 995 394H1118C1130 394 1134 402.3 1146 402.3H1272Q1297.5 402.3 1297.5 428V486H1333Q1347 486 1347 500V650Q1347 664 1333 664H1310C1298 664 1300 670 1288 670H815C800 670 805 656 790 656H772Q758.7 656 758.7 642V529Q758.7 515 772 515Z" stroke="#ff00ff" stroke-width="1.6" fill="none"/>
<path d="M819.5 524V432Q819.5 411.3 840 411.3H958C975 411.3 978 403 995 403H1118C1130 403 1134 411.3 1146 411.3H1268Q1288.5 411.3 1288.5 432V495H1325Q1338 495 1338 508V645Q1338 657 1326 657H1305C1295 657 1296 658.6 1286 658.6H818C806 658.6 806 647 795 647H780Q768 647 768 635V536Q768 524 780 524Z" stroke="#ff00ff" stroke-width="1.6" fill="none"/>
<path d="M771 646V540Q771 527 784 527H852" stroke="#ff00ff" stroke-width="1.3" fill="none"/>
<path d="M1341 646V511Q1341 498.5 1328 498.5H1289" stroke="#ff00ff" stroke-width="1.3" fill="none"/>
<path d="M775 642.5L800 642.5" stroke="#e8e8e8" stroke-width="1.3"/>
<path d="M775 645L800 645" stroke="#b0b0b0" stroke-width="0.8"/>
<path d="M1008 645.8H1099Q1103 645.8 1103 650V657.3H1290" stroke="#ff00ff" stroke-width="1.3" fill="none"/>
<path d="M823 437V428Q823 415 836 415H852V437" stroke="#ff00ff" stroke-width="1.4" fill="none"/>
<path d="M823 434L852 434" stroke="#ff00ff" stroke-width="1.3"/>
<path d="M823 437.5L852 437.5" stroke="#ff00ff" stroke-width="1.1"/>
<path d="M823 476L852 476" stroke="#ff00ff" stroke-width="1.3"/>
<path d="M823 479L852 479" stroke="#ff00ff" stroke-width="1.1"/>
<path d="M823 511L852 511" stroke="#ff00ff" stroke-width="1.3"/>
<path d="M823 514L852 514" stroke="#ff00ff" stroke-width="1.1"/>
<path d="M851 437L851 530" stroke="#ff00ff" stroke-width="1.4"/>
<path d="M825 434L842 431L851 416" stroke="#c070e8" stroke-width="1" fill="none"/>
<path d="M826 525L830 444L850 440" stroke="#c070e8" stroke-width="1" fill="none"/>
<path d="M825 520L852 514" stroke="#c070e8" stroke-width="1" fill="none"/>
<path d="M1256.4 435.2V414.6H1273Q1286 414.6 1286 430V497" stroke="#ff00ff" stroke-width="1.4" fill="none"/>
<path d="M1256 435.2L1286 435.2" stroke="#ff00ff" stroke-width="1.8"/>
<path d="M1256 438.4L1286 438.4" stroke="#ff00ff" stroke-width="1.1"/>
<path d="M1259 476.5L1286 476.5" stroke="#ff00ff" stroke-width="1.5"/>
<path d="M1259 478.8L1286 478.8" stroke="#ff00ff" stroke-width="1.1"/>
<path d="M1259 478L1259 497" stroke="#ff00ff" stroke-width="1.4"/>
<path d="M1258 415L1265 431L1284 434" stroke="#c070e8" stroke-width="1" fill="none"/>
<path d="M1262 440L1281 444L1285 475" stroke="#c070e8" stroke-width="1" fill="none"/>
<path d="M1260 480L1282 482L1286 495" stroke="#c070e8" stroke-width="1" fill="none"/>
<path d="M1258 499.2L1286 499.2" stroke="#ff9a00" stroke-width="1.2"/>
<path d="M1258 497.6L1286 497.6" stroke="#ffe600" stroke-width="1"/>
<path d="M946.5 451V425L948.5 423" stroke="#ff00ff" stroke-width="1.7" fill="none"/>
<path d="M952.4 451V425L954.4 423" stroke="#ff00ff" stroke-width="1.7" fill="none"/>
<path d="M958.3 451V425L960.3 423" stroke="#ff00ff" stroke-width="1.7" fill="none"/>
<path d="M964.1999999999999 451V425L966.1999999999999 423" stroke="#ff00ff" stroke-width="1.7" fill="none"/>
<path d="M970.0999999999999 451V425L972.0999999999999 423" stroke="#ff00ff" stroke-width="1.7" fill="none"/>
<path d="M975.9999999999999 451V425L977.9999999999999 423" stroke="#ff00ff" stroke-width="1.7" fill="none"/>
<path d="M981.8999999999999 451V425L983.8999999999999 423" stroke="#ff00ff" stroke-width="1.7" fill="none"/>
<path d="M987.7999999999998 451V425L989.7999999999998 423" stroke="#ff00ff" stroke-width="1.7" fill="none"/>
<path d="M993.6999999999998 451V425L995.6999999999998 423" stroke="#ff00ff" stroke-width="1.7" fill="none"/>
<path d="M999.5999999999998 451V425L1001.5999999999998 423" stroke="#ff00ff" stroke-width="1.7" fill="none"/>
<path d="M1005.4999999999998 451V425L1007.4999999999998 423" stroke="#ff00ff" stroke-width="1.7" fill="none"/>
<path d="M1013 451V425L1015 423" stroke="#ff00ff" stroke-width="1.7" fill="none"/>
<path d="M1018.9 451V425L1020.9 423" stroke="#ff00ff" stroke-width="1.7" fill="none"/>
<path d="M1024.8 451V425L1026.8 423" stroke="#ff00ff" stroke-width="1.7" fill="none"/>
<path d="M1030.7 451V425L1032.7 423" stroke="#ff00ff" stroke-width="1.7" fill="none"/>
<path d="M1036.6000000000001 451V425L1038.6000000000001 423" stroke="#ff00ff" stroke-width="1.7" fill="none"/>
<path d="M1042.5000000000002 451V425L1044.5000000000002 423" stroke="#ff00ff" stroke-width="1.7" fill="none"/>
<path d="M1048.4000000000003 451V425L1050.4000000000003 423" stroke="#ff00ff" stroke-width="1.7" fill="none"/>
<path d="M945 451L1052 451" stroke="#ff00ff" stroke-width="1.8"/>
<path d="M1161.9 451V425L1159.9 423" stroke="#ff00ff" stroke-width="1.7" fill="none"/>
<path d="M1156.0 451V425L1154.0 423" stroke="#ff00ff" stroke-width="1.7" fill="none"/>
<path d="M1150.1 451V425L1148.1 423" stroke="#ff00ff" stroke-width="1.7" fill="none"/>
<path d="M1144.2 451V425L1142.2 423" stroke="#ff00ff" stroke-width="1.7" fill="none"/>
<path d="M1138.3 451V425L1136.3 423" stroke="#ff00ff" stroke-width="1.7" fill="none"/>
<path d="M1132.4 451V425L1130.4 423" stroke="#ff00ff" stroke-width="1.7" fill="none"/>
<path d="M1126.5 451V425L1124.5 423" stroke="#ff00ff" stroke-width="1.7" fill="none"/>
<path d="M1120.6 451V425L1118.6 423" stroke="#ff00ff" stroke-width="1.7" fill="none"/>
<path d="M1114.7 451V425L1112.7 423" stroke="#ff00ff" stroke-width="1.7" fill="none"/>
<path d="M1108.8 451V425L1106.8 423" stroke="#ff00ff" stroke-width="1.7" fill="none"/>
<path d="M1102.9 451V425L1100.9 423" stroke="#ff00ff" stroke-width="1.7" fill="none"/>
<path d="M1095.4 451V425L1093.4 423" stroke="#ff00ff" stroke-width="1.7" fill="none"/>
<path d="M1089.5 451V425L1087.5 423" stroke="#ff00ff" stroke-width="1.7" fill="none"/>
<path d="M1083.6 451V425L1081.6 423" stroke="#ff00ff" stroke-width="1.7" fill="none"/>
<path d="M1077.7 451V425L1075.7 423" stroke="#ff00ff" stroke-width="1.7" fill="none"/>
<path d="M1071.8 451V425L1069.8 423" stroke="#ff00ff" stroke-width="1.7" fill="none"/>
<path d="M1065.9 451V425L1063.9 423" stroke="#ff00ff" stroke-width="1.7" fill="none"/>
<path d="M1060.0 451V425L1058.0 423" stroke="#ff00ff" stroke-width="1.7" fill="none"/>
<path d="M1163.4 451L1056.4 451" stroke="#ff00ff" stroke-width="1.8"/>
<path d="M771 530L853 530" stroke="#00e8f8" stroke-width="4.6" fill="none" stroke-linecap="square"/>
<path d="M822 545L853 545" stroke="#00e8f8" stroke-width="4.6" fill="none" stroke-linecap="square"/>
<path d="M822 568.5L1006 568.5" stroke="#00e8f8" stroke-width="4.6" fill="none" stroke-linecap="square"/>
<path d="M1286.4 568.5L1102.4 568.5" stroke="#00e8f8" stroke-width="4.6" fill="none" stroke-linecap="square"/>
<path d="M771 632L821.5 632" stroke="#00e8f8" stroke-width="4.6" fill="none" stroke-linecap="square"/>
<path d="M821.5 632L1054.2 632" stroke="#00e8f8" stroke-width="4.6" fill="none" stroke-linecap="square"/>
<path d="M1286.9 632L1054.2 632" stroke="#00e8f8" stroke-width="4.6" fill="none" stroke-linecap="square"/>
<path d="M820 654.5L1006.2 654.5" stroke="#00e8f8" stroke-width="4.6" fill="none" stroke-linecap="square"/>
<path d="M1288.4 654.5L1102.2 654.5" stroke="#00e8f8" stroke-width="4.6" fill="none" stroke-linecap="square"/>
<path d="M1006.2 644L1102.2 644" stroke="#00e8f8" stroke-width="4.6" fill="none" stroke-linecap="square"/>
<path d="M973 529L1054.2 529" stroke="#00e8f8" stroke-width="4.6" fill="none" stroke-linecap="square"/>
<path d="M1135.4 529L1054.2 529" stroke="#00e8f8" stroke-width="4.6" fill="none" stroke-linecap="square"/>
<path d="M916 456.5L1054.2 456.5" stroke="#00e8f8" stroke-width="4.6" fill="none" stroke-linecap="square"/>
<path d="M1192.4 456.5L1054.2 456.5" stroke="#00e8f8" stroke-width="4.6" fill="none" stroke-linecap="square"/>
<path d="M852 477.5L1054.2 477.5" stroke="#00e8f8" stroke-width="4.6" fill="none" stroke-linecap="square"/>
<path d="M1256.4 477.5L1054.2 477.5" stroke="#00e8f8" stroke-width="4.6" fill="none" stroke-linecap="square"/>
<path d="M855 509.5L893 509.5" stroke="#00e8f8" stroke-width="4.6" fill="none" stroke-linecap="square"/>
<path d="M893 518L938 518" stroke="#00e8f8" stroke-width="4.6" fill="none" stroke-linecap="square"/>
<path d="M1215.4 518L1170.4 518" stroke="#00e8f8" stroke-width="4.6" fill="none" stroke-linecap="square"/>
<path d="M973 489.3L1000.5 489.3" stroke="#00e8f8" stroke-width="4.6" fill="none" stroke-linecap="square"/>
<path d="M1135.4 489.3L1107.9 489.3" stroke="#00e8f8" stroke-width="4.6" fill="none" stroke-linecap="square"/>
<path d="M940.6 420.8L1054.2 420.8" stroke="#00e8f8" stroke-width="4.6" fill="none" stroke-linecap="square"/>
<path d="M1167.8 420.8L1054.2 420.8" stroke="#00e8f8" stroke-width="4.6" fill="none" stroke-linecap="square"/>
<path d="M940.6 452.8L1054.2 452.8" stroke="#00e8f8" stroke-width="4.6" fill="none" stroke-linecap="square"/>
<path d="M1167.8 452.8L1054.2 452.8" stroke="#00e8f8" stroke-width="4.6" fill="none" stroke-linecap="square"/>
<path d="M942.5 420.8L942.5 452.8" stroke="#00e8f8" stroke-width="4.6" fill="none" stroke-linecap="square"/>
<path d="M1165.9 420.8L1165.9 452.8" stroke="#00e8f8" stroke-width="4.6" fill="none" stroke-linecap="square"/>
<path d="M1009.3 420.8L1009.3 452.8" stroke="#00e8f8" stroke-width="4.6" fill="none" stroke-linecap="square"/>
<path d="M1099.1 420.8L1099.1 452.8" stroke="#00e8f8" stroke-width="4.6" fill="none" stroke-linecap="square"/>
<path d="M773 528L773 641" stroke="#00e8f8" stroke-width="4.6" fill="none" stroke-linecap="square"/>
<path d="M821.5 528L821.5 655" stroke="#00e8f8" stroke-width="4.6" fill="none" stroke-linecap="square"/>
<path d="M913.8 518L913.8 655" stroke="#00e8f8" stroke-width="4.6" fill="none" stroke-linecap="square"/>
<path d="M1194.6 518L1194.6 655" stroke="#00e8f8" stroke-width="4.6" fill="none" stroke-linecap="square"/>
<path d="M1006.2 528L1006.2 655" stroke="#00e8f8" stroke-width="4.6" fill="none" stroke-linecap="square"/>
<path d="M1102.2 528L1102.2 655" stroke="#00e8f8" stroke-width="4.6" fill="none" stroke-linecap="square"/>
<path d="M1053.6 528L1053.6 632" stroke="#00e8f8" stroke-width="4.6" fill="none" stroke-linecap="square"/>
<path d="M861.8 436L861.8 478" stroke="#00e8f8" stroke-width="4.6" fill="none" stroke-linecap="square"/>
<path d="M1246.6 436L1246.6 478" stroke="#00e8f8" stroke-width="4.6" fill="none" stroke-linecap="square"/>
<path d="M896.2 436L896.2 478" stroke="#00e8f8" stroke-width="4.6" fill="none" stroke-linecap="square"/>
<path d="M1212.2 436L1212.2 478" stroke="#00e8f8" stroke-width="4.6" fill="none" stroke-linecap="square"/>
<path d="M855.8 478L855.8 510" stroke="#00e8f8" stroke-width="4.6" fill="none" stroke-linecap="square"/>
<path d="M876.5 478L876.5 510" stroke="#00e8f8" stroke-width="4.6" fill="none" stroke-linecap="square"/>
<path d="M892.5 478L892.5 500" stroke="#00e8f8" stroke-width="4.6" fill="none" stroke-linecap="square"/>
<path d="M1215.9 478L1215.9 500" stroke="#00e8f8" stroke-width="4.6" fill="none" stroke-linecap="square"/>
<path d="M938.2 478L938.2 510" stroke="#00e8f8" stroke-width="4.6" fill="none" stroke-linecap="square"/>
<path d="M1170.2 478L1170.2 510" stroke="#00e8f8" stroke-width="4.6" fill="none" stroke-linecap="square"/>
<path d="M972.5 456L972.5 540" stroke="#00e8f8" stroke-width="4.6" fill="none" stroke-linecap="square"/>
<path d="M1135.9 456L1135.9 540" stroke="#00e8f8" stroke-width="4.6" fill="none" stroke-linecap="square"/>
<path d="M1001 456L1001 530" stroke="#00e8f8" stroke-width="4.6" fill="none" stroke-linecap="square"/>
<path d="M1120 456L1120 530" stroke="#00e8f8" stroke-width="4.6" fill="none" stroke-linecap="square"/>
<path d="M852 530L852 545" stroke="#00e8f8" stroke-width="4.6" fill="none" stroke-linecap="square"/>
<path d="M866 436.3L904 436.3" stroke="#00e8f8" stroke-width="4.6" fill="none" stroke-linecap="square"/>
<path d="M1242.4 436.3L1204.4 436.3" stroke="#00e8f8" stroke-width="4.6" fill="none" stroke-linecap="square"/>
<path d="M1054 457L1054 420" stroke="#00e8f8" stroke-width="4.6" fill="none" stroke-linecap="square"/>
<path d="M1286.9 501.7L1286.9 655" stroke="#00e8f8" stroke-width="4.6" fill="none" stroke-linecap="square"/>
<path d="M1335.2 501.7L1335.2 650" stroke="#00e8f8" stroke-width="4.6" fill="none" stroke-linecap="square"/>
<path d="M1285 501.7L1337 501.7" stroke="#00e8f8" stroke-width="4.6" fill="none" stroke-linecap="square"/>
<path d="M1289 544L1333 544" stroke="#00e8f8" stroke-width="4.6" fill="none" stroke-linecap="square"/>
<path d="M1304 544L1304 582.5" stroke="#00e8f8" stroke-width="4.6" fill="none" stroke-linecap="square"/>
<path d="M1304 582.5L1333 582.5" stroke="#00e8f8" stroke-width="4.6" fill="none" stroke-linecap="square"/>
<path d="M1289 638.3L1337 638.3" stroke="#00e8f8" stroke-width="4.6" fill="none" stroke-linecap="square"/>
<path d="M1216 503.5L1289 503.5" stroke="#00e8f8" stroke-width="4.6" fill="none" stroke-linecap="square"/>
<path d="M1180 518L1216 518" stroke="#00e8f8" stroke-width="4.6" fill="none" stroke-linecap="square"/>
<path d="M1215.6 478L1215.6 500" stroke="#00e8f8" stroke-width="4.6" fill="none" stroke-linecap="square"/>
<path d="M1257 527L1279 527" stroke="#00e8f8" stroke-width="4.6" fill="none" stroke-linecap="square"/>
<path d="M771 530L853 530" stroke="#333238" stroke-width="1.7" fill="none"/>
<path d="M822 545L853 545" stroke="#333238" stroke-width="1.7" fill="none"/>
<path d="M822 568.5L1006 568.5" stroke="#333238" stroke-width="1.7" fill="none"/>
<path d="M1286.4 568.5L1102.4 568.5" stroke="#333238" stroke-width="1.7" fill="none"/>
<path d="M771 632L821.5 632" stroke="#333238" stroke-width="1.7" fill="none"/>
<path d="M821.5 632L1054.2 632" stroke="#333238" stroke-width="1.7" fill="none"/>
<path d="M1286.9 632L1054.2 632" stroke="#333238" stroke-width="1.7" fill="none"/>
<path d="M820 654.5L1006.2 654.5" stroke="#333238" stroke-width="1.7" fill="none"/>
<path d="M1288.4 654.5L1102.2 654.5" stroke="#333238" stroke-width="1.7" fill="none"/>
<path d="M1006.2 644L1102.2 644" stroke="#333238" stroke-width="1.7" fill="none"/>
<path d="M973 529L1054.2 529" stroke="#333238" stroke-width="1.7" fill="none"/>
<path d="M1135.4 529L1054.2 529" stroke="#333238" stroke-width="1.7" fill="none"/>
<path d="M916 456.5L1054.2 456.5" stroke="#333238" stroke-width="1.7" fill="none"/>
<path d="M1192.4 456.5L1054.2 456.5" stroke="#333238" stroke-width="1.7" fill="none"/>
<path d="M852 477.5L1054.2 477.5" stroke="#333238" stroke-width="1.7" fill="none"/>
<path d="M1256.4 477.5L1054.2 477.5" stroke="#333238" stroke-width="1.7" fill="none"/>
<path d="M855 509.5L893 509.5" stroke="#333238" stroke-width="1.7" fill="none"/>
<path d="M893 518L938 518" stroke="#333238" stroke-width="1.7" fill="none"/>
<path d="M1215.4 518L1170.4 518" stroke="#333238" stroke-width="1.7" fill="none"/>
<path d="M973 489.3L1000.5 489.3" stroke="#333238" stroke-width="1.7" fill="none"/>
<path d="M1135.4 489.3L1107.9 489.3" stroke="#333238" stroke-width="1.7" fill="none"/>
<path d="M940.6 420.8L1054.2 420.8" stroke="#333238" stroke-width="1.7" fill="none"/>
<path d="M1167.8 420.8L1054.2 420.8" stroke="#333238" stroke-width="1.7" fill="none"/>
<path d="M940.6 452.8L1054.2 452.8" stroke="#333238" stroke-width="1.7" fill="none"/>
<path d="M1167.8 452.8L1054.2 452.8" stroke="#333238" stroke-width="1.7" fill="none"/>
<path d="M942.5 420.8L942.5 452.8" stroke="#333238" stroke-width="1.7" fill="none"/>
<path d="M1165.9 420.8L1165.9 452.8" stroke="#333238" stroke-width="1.7" fill="none"/>
<path d="M1009.3 420.8L1009.3 452.8" stroke="#333238" stroke-width="1.7" fill="none"/>
<path d="M1099.1 420.8L1099.1 452.8" stroke="#333238" stroke-width="1.7" fill="none"/>
<path d="M773 528L773 641" stroke="#333238" stroke-width="1.7" fill="none"/>
<path d="M821.5 528L821.5 655" stroke="#333238" stroke-width="1.7" fill="none"/>
<path d="M913.8 518L913.8 655" stroke="#333238" stroke-width="1.7" fill="none"/>
<path d="M1194.6 518L1194.6 655" stroke="#333238" stroke-width="1.7" fill="none"/>
<path d="M1006.2 528L1006.2 655" stroke="#333238" stroke-width="1.7" fill="none"/>
<path d="M1102.2 528L1102.2 655" stroke="#333238" stroke-width="1.7" fill="none"/>
<path d="M1053.6 528L1053.6 632" stroke="#333238" stroke-width="1.7" fill="none"/>
<path d="M861.8 436L861.8 478" stroke="#333238" stroke-width="1.7" fill="none"/>
<path d="M1246.6 436L1246.6 478" stroke="#333238" stroke-width="1.7" fill="none"/>
<path d="M896.2 436L896.2 478" stroke="#333238" stroke-width="1.7" fill="none"/>
<path d="M1212.2 436L1212.2 478" stroke="#333238" stroke-width="1.7" fill="none"/>
<path d="M855.8 478L855.8 510" stroke="#333238" stroke-width="1.7" fill="none"/>
<path d="M876.5 478L876.5 510" stroke="#333238" stroke-width="1.7" fill="none"/>
<path d="M892.5 478L892.5 500" stroke="#333238" stroke-width="1.7" fill="none"/>
<path d="M1215.9 478L1215.9 500" stroke="#333238" stroke-width="1.7" fill="none"/>
<path d="M938.2 478L938.2 510" stroke="#333238" stroke-width="1.7" fill="none"/>
<path d="M1170.2 478L1170.2 510" stroke="#333238" stroke-width="1.7" fill="none"/>
<path d="M972.5 456L972.5 540" stroke="#333238" stroke-width="1.7" fill="none"/>
<path d="M1135.9 456L1135.9 540" stroke="#333238" stroke-width="1.7" fill="none"/>
<path d="M1001 456L1001 530" stroke="#333238" stroke-width="1.7" fill="none"/>
<path d="M1120 456L1120 530" stroke="#333238" stroke-width="1.7" fill="none"/>
<path d="M852 530L852 545" stroke="#333238" stroke-width="1.7" fill="none"/>
<path d="M866 436.3L904 436.3" stroke="#333238" stroke-width="1.7" fill="none"/>
<path d="M1242.4 436.3L1204.4 436.3" stroke="#333238" stroke-width="1.7" fill="none"/>
<path d="M1054 457L1054 420" stroke="#333238" stroke-width="1.7" fill="none"/>
<path d="M1286.9 501.7L1286.9 655" stroke="#333238" stroke-width="1.7" fill="none"/>
<path d="M1335.2 501.7L1335.2 650" stroke="#333238" stroke-width="1.7" fill="none"/>
<path d="M1285 501.7L1337 501.7" stroke="#333238" stroke-width="1.7" fill="none"/>
<path d="M1289 544L1333 544" stroke="#333238" stroke-width="1.7" fill="none"/>
<path d="M1304 544L1304 582.5" stroke="#333238" stroke-width="1.7" fill="none"/>
<path d="M1304 582.5L1333 582.5" stroke="#333238" stroke-width="1.7" fill="none"/>
<path d="M1289 638.3L1337 638.3" stroke="#333238" stroke-width="1.7" fill="none"/>
<path d="M1216 503.5L1289 503.5" stroke="#333238" stroke-width="1.7" fill="none"/>
<path d="M1180 518L1216 518" stroke="#333238" stroke-width="1.7" fill="none"/>
<path d="M1215.6 478L1215.6 500" stroke="#333238" stroke-width="1.7" fill="none"/>
<path d="M1257 527L1279 527" stroke="#333238" stroke-width="1.7" fill="none"/>
<path d="M773 555V578" stroke="#ffe600" stroke-width="4.6" fill="none" stroke-linejoin="miter"/>
<path d="M773 555V578" stroke="#ff9a00" stroke-width="2.2" fill="none" stroke-linejoin="miter"/>
<path d="M773 603V632" stroke="#ffe600" stroke-width="4.6" fill="none" stroke-linejoin="miter"/>
<path d="M773 603V632" stroke="#ff9a00" stroke-width="2.2" fill="none" stroke-linejoin="miter"/>
<path d="M821 544V569" stroke="#ffe600" stroke-width="4.6" fill="none" stroke-linejoin="miter"/>
<path d="M821 544V569" stroke="#ff9a00" stroke-width="2.2" fill="none" stroke-linejoin="miter"/>
<path d="M821 602V632" stroke="#ffe600" stroke-width="4.6" fill="none" stroke-linejoin="miter"/>
<path d="M821 602V632" stroke="#ff9a00" stroke-width="2.2" fill="none" stroke-linejoin="miter"/>
<path d="M1287 527.7V552.7" stroke="#ffe600" stroke-width="4.6" fill="none" stroke-linejoin="miter"/>
<path d="M1287 527.7V552.7" stroke="#ff9a00" stroke-width="2.2" fill="none" stroke-linejoin="miter"/>
<path d="M1287 602.7V639.2H1295" stroke="#ffe600" stroke-width="4.6" fill="none" stroke-linejoin="miter"/>
<path d="M1287 602.7V639.2H1295" stroke="#ff9a00" stroke-width="2.2" fill="none" stroke-linejoin="miter"/>
<path d="M1335 525.8V563.3" stroke="#ffe600" stroke-width="4.6" fill="none" stroke-linejoin="miter"/>
<path d="M1335 525.8V563.3" stroke="#ff9a00" stroke-width="2.2" fill="none" stroke-linejoin="miter"/>
<path d="M1335 602.7V649.8" stroke="#ffe600" stroke-width="4.6" fill="none" stroke-linejoin="miter"/>
<path d="M1335 602.7V649.8" stroke="#ff9a00" stroke-width="2.2" fill="none" stroke-linejoin="miter"/>
<path d="M1257 503V527.7H1246V569" stroke="#ffe600" stroke-width="4.6" fill="none" stroke-linejoin="miter"/>
<path d="M1257 503V527.7H1246V569" stroke="#ff9a00" stroke-width="2.2" fill="none" stroke-linejoin="miter"/>
<path d="M1257 503.5H1279V527" stroke="#ffe600" stroke-width="4.6" fill="none" stroke-linejoin="miter"/>
<path d="M1257 503.5H1279V527" stroke="#ff9a00" stroke-width="2.2" fill="none" stroke-linejoin="miter"/>
<path d="M854.7 510V546H863.4V570" stroke="#ffe600" stroke-width="4.6" fill="none" stroke-linejoin="miter"/>
<path d="M854.7 510V546H863.4V570" stroke="#ff9a00" stroke-width="2.2" fill="none" stroke-linejoin="miter"/>
<path d="M973.3 537V546H964.6V570" stroke="#ffe600" stroke-width="4.6" fill="none" stroke-linejoin="miter"/>
<path d="M973.3 537V546H964.6V570" stroke="#ff9a00" stroke-width="2.2" fill="none" stroke-linejoin="miter"/>
<path d="M1135.1 537V546H1143.8V570" stroke="#ffe600" stroke-width="4.6" fill="none" stroke-linejoin="miter"/>
<path d="M1135.1 537V546H1143.8V570" stroke="#ff9a00" stroke-width="2.2" fill="none" stroke-linejoin="miter"/>
<path d="M913.8 586V631" stroke="#ffe600" stroke-width="4.6" fill="none" stroke-linejoin="miter"/>
<path d="M913.8 586V631" stroke="#ff9a00" stroke-width="2.2" fill="none" stroke-linejoin="miter"/>
<path d="M1194.6 586V631" stroke="#ffe600" stroke-width="4.6" fill="none" stroke-linejoin="miter"/>
<path d="M1194.6 586V631" stroke="#ff9a00" stroke-width="2.2" fill="none" stroke-linejoin="miter"/>
<path d="M901.5 631H926.6" stroke="#ffe600" stroke-width="4.6" fill="none" stroke-linejoin="miter"/>
<path d="M901.5 631H926.6" stroke="#ff9a00" stroke-width="2.2" fill="none" stroke-linejoin="miter"/>
<path d="M1206.9 631H1181.8" stroke="#ffe600" stroke-width="4.6" fill="none" stroke-linejoin="miter"/>
<path d="M1206.9 631H1181.8" stroke="#ff9a00" stroke-width="2.2" fill="none" stroke-linejoin="miter"/>
<path d="M1006.2 543V570" stroke="#ffe600" stroke-width="4.6" fill="none" stroke-linejoin="miter"/>
<path d="M1006.2 543V570" stroke="#ff9a00" stroke-width="2.2" fill="none" stroke-linejoin="miter"/>
<path d="M1102.2 543V570" stroke="#ffe600" stroke-width="4.6" fill="none" stroke-linejoin="miter"/>
<path d="M1102.2 543V570" stroke="#ff9a00" stroke-width="2.2" fill="none" stroke-linejoin="miter"/>
<path d="M1006.2 590V631" stroke="#ffe600" stroke-width="4.6" fill="none" stroke-linejoin="miter"/>
<path d="M1006.2 590V631" stroke="#ff9a00" stroke-width="2.2" fill="none" stroke-linejoin="miter"/>
<path d="M1102.2 590V631" stroke="#ffe600" stroke-width="4.6" fill="none" stroke-linejoin="miter"/>
<path d="M1102.2 590V631" stroke="#ff9a00" stroke-width="2.2" fill="none" stroke-linejoin="miter"/>
<path d="M1006.2 631H1016" stroke="#ffe600" stroke-width="4.6" fill="none" stroke-linejoin="miter"/>
<path d="M1006.2 631H1016" stroke="#ff9a00" stroke-width="2.2" fill="none" stroke-linejoin="miter"/>
<path d="M1102.2 631H1092.4" stroke="#ffe600" stroke-width="4.6" fill="none" stroke-linejoin="miter"/>
<path d="M1102.2 631H1092.4" stroke="#ff9a00" stroke-width="2.2" fill="none" stroke-linejoin="miter"/>
<path d="M1053 546V580" stroke="#ffe600" stroke-width="4.6" fill="none" stroke-linejoin="miter"/>
<path d="M1053 546V580" stroke="#ff9a00" stroke-width="2.2" fill="none" stroke-linejoin="miter"/>
<path d="M853 436.3H866M903.7 436.3L916.2 447.5V478M841.3 465V448.8L852.5 436.3M841.3 465L852.5 477.5H866" stroke="#ffe600" stroke-width="4.6" fill="none" stroke-linejoin="miter"/>
<path d="M853 436.3H866M903.7 436.3L916.2 447.5V478M841.3 465V448.8L852.5 436.3M841.3 465L852.5 477.5H866" stroke="#ff9a00" stroke-width="2.2" fill="none" stroke-linejoin="miter"/>
<path d="M1255.4 436.3H1242.4M1204.7 436.3L1192.2 447.5V478M1267.1 465V448.8L1255.9 436.3M1267.1 465L1255.9 477.5H1242.4" stroke="#ffe600" stroke-width="4.6" fill="none" stroke-linejoin="miter"/>
<path d="M1255.4 436.3H1242.4M1204.7 436.3L1192.2 447.5V478M1267.1 465V448.8L1255.9 436.3M1267.1 465L1255.9 477.5H1242.4" stroke="#ff9a00" stroke-width="2.2" fill="none" stroke-linejoin="miter"/>
<path d="M937 476.3H973V510H940V519H932" stroke="#ffe600" stroke-width="4.6" fill="none" stroke-linejoin="miter"/>
<path d="M937 476.3H973V510H940V519H932" stroke="#ff9a00" stroke-width="2.2" fill="none" stroke-linejoin="miter"/>
<path d="M1171.4 476.3H1135.4V510H1168.4V519H1176.4" stroke="#ffe600" stroke-width="4.6" fill="none" stroke-linejoin="miter"/>
<path d="M1171.4 476.3H1135.4V510H1168.4V519H1176.4" stroke="#ff9a00" stroke-width="2.2" fill="none" stroke-linejoin="miter"/>
<path d="M889.5 500H893.5V519H889.5M891.5 508H888" stroke="#ffe600" stroke-width="4.6" fill="none" stroke-linejoin="miter"/>
<path d="M889.5 500H893.5V519H889.5M891.5 508H888" stroke="#ff9a00" stroke-width="2.2" fill="none" stroke-linejoin="miter"/>
<path d="M1218.9 500H1214.9V519H1218.9M1216.9 508H1220.4" stroke="#ffe600" stroke-width="4.6" fill="none" stroke-linejoin="miter"/>
<path d="M1218.9 500H1214.9V519H1218.9M1216.9 508H1220.4" stroke="#ff9a00" stroke-width="2.2" fill="none" stroke-linejoin="miter"/>
<rect x="863" y="438" width="31.5" height="19" stroke="#ffe600" stroke-width="1.5" fill="none"/>
<path d="M865.0 438L865.0 475.5" stroke="#ffe600" stroke-width="1.5"/>
<path d="M869.1 438L869.1 475.5" stroke="#ffe600" stroke-width="1.5"/>
<path d="M873.2 438L873.2 475.5" stroke="#ffe600" stroke-width="1.5"/>
<path d="M877.3 438L877.3 475.5" stroke="#ffe600" stroke-width="1.5"/>
<path d="M881.4 438L881.4 475.5" stroke="#ffe600" stroke-width="1.5"/>
<path d="M885.5 438L885.5 475.5" stroke="#ffe600" stroke-width="1.5"/>
<path d="M889.6 438L889.6 475.5" stroke="#ffe600" stroke-width="1.5"/>
<path d="M893.7 438L893.7 475.5" stroke="#ffe600" stroke-width="1.5"/>
<path d="M863 475.5L894.5 475.5" stroke="#ffe600" stroke-width="1.5"/>
<path d="M866 440L872 452L869 449L878 462" stroke="#ffe600" stroke-width="0.9" fill="none"/>
<rect x="1213.9" y="438" width="31.5" height="19" stroke="#ffe600" stroke-width="1.5" fill="none"/>
<path d="M1243.4 438L1243.4 475.5" stroke="#ffe600" stroke-width="1.5"/>
<path d="M1239.3 438L1239.3 475.5" stroke="#ffe600" stroke-width="1.5"/>
<path d="M1235.2 438L1235.2 475.5" stroke="#ffe600" stroke-width="1.5"/>
<path d="M1231.1 438L1231.1 475.5" stroke="#ffe600" stroke-width="1.5"/>
<path d="M1227.0 438L1227.0 475.5" stroke="#ffe600" stroke-width="1.5"/>
<path d="M1222.9 438L1222.9 475.5" stroke="#ffe600" stroke-width="1.5"/>
<path d="M1218.8 438L1218.8 475.5" stroke="#ffe600" stroke-width="1.5"/>
<path d="M1214.7 438L1214.7 475.5" stroke="#ffe600" stroke-width="1.5"/>
<path d="M1245.4 475.5L1213.9 475.5" stroke="#ffe600" stroke-width="1.5"/>
<path d="M1242.4 440L1236.4 452L1239.4 449L1230.4 462" stroke="#ffe600" stroke-width="0.9" fill="none"/>
<circle cx="1001" cy="477" r="1.6" stroke="#ffe600" stroke-width="1.2" fill="none"/>
<circle cx="1107.4" cy="477" r="1.6" stroke="#ffe600" stroke-width="1.2" fill="none"/>
<circle cx="1001" cy="490" r="1.6" stroke="#ffe600" stroke-width="1.2" fill="none"/>
<circle cx="1107.4" cy="490" r="1.6" stroke="#ffe600" stroke-width="1.2" fill="none"/>
<circle cx="943" cy="421" r="1.6" stroke="#ffe600" stroke-width="1.2" fill="none"/>
<circle cx="1165.4" cy="421" r="1.6" stroke="#ffe600" stroke-width="1.2" fill="none"/>
<circle cx="1009" cy="421" r="1.6" stroke="#ffe600" stroke-width="1.2" fill="none"/>
<circle cx="1099.4" cy="421" r="1.6" stroke="#ffe600" stroke-width="1.2" fill="none"/>
<circle cx="773" cy="641" r="1.6" stroke="#ffe600" stroke-width="1.2" fill="none"/>
<circle cx="1335.4" cy="641" r="1.6" stroke="#ffe600" stroke-width="1.2" fill="none"/>
<circle cx="821" cy="654" r="1.6" stroke="#ffe600" stroke-width="1.2" fill="none"/>
<circle cx="1287.4" cy="654" r="1.6" stroke="#ffe600" stroke-width="1.2" fill="none"/>
<circle cx="773" cy="545" r="1.6" stroke="#ffe600" stroke-width="1.2" fill="none"/>
<circle cx="1335.4" cy="545" r="1.6" stroke="#ffe600" stroke-width="1.2" fill="none"/>
<circle cx="801" cy="640" r="1.6" stroke="#ffe600" stroke-width="1.2" fill="none"/>
<circle cx="1307.4" cy="640" r="1.6" stroke="#ffe600" stroke-width="1.2" fill="none"/>
<circle cx="822" cy="640" r="1.6" stroke="#ffe600" stroke-width="1.2" fill="none"/>
<circle cx="1286.4" cy="640" r="1.6" stroke="#ffe600" stroke-width="1.2" fill="none"/>
<path d="M917 452L936 448L940 424L919 432L916 440" stroke="#c070e8" stroke-width="1" fill="none"/>
<path d="M940 515L944 483L970 479" stroke="#c070e8" stroke-width="1" fill="none"/>
<path d="M827 605" stroke="#c070e8" stroke-width="1" fill="none"/>
<path d="M1191.4 452L1172.4 448L1168.4 424L1189.4 432L1192.4 440" stroke="#c070e8" stroke-width="1" fill="none"/>
<path d="M1168.4 515L1164.4 483L1138.4 479" stroke="#c070e8" stroke-width="1" fill="none"/>
<path d="M1281.4 605" stroke="#c070e8" stroke-width="1" fill="none"/>
<path d="M977.5 526L995.8 493L1142 484" stroke="#c070e8" stroke-width="1.2" fill="none"/>
<path d="M1040 486L1062 486" stroke="#e8e8e8" stroke-width="1.6"/>
<path d="M900.8 647A2.5 2.5 0 0 1 905.8 647" stroke="#ffe600" stroke-width="1.6" fill="none"/>
<path d="M900.8 652A2.5 2.5 0 0 0 905.8 652" stroke="#ffe600" stroke-width="1.6" fill="none"/>
<path d="M921.8 647A2.5 2.5 0 0 1 926.8 647" stroke="#ffe600" stroke-width="1.6" fill="none"/>
<path d="M921.8 652A2.5 2.5 0 0 0 926.8 652" stroke="#ffe600" stroke-width="1.6" fill="none"/>
<path d="M901.3 659V665.5H926.3V659M913.8 659V665.5" stroke="#00e800" stroke-width="1.3" fill="none"/>
<path d="M1181.6 647A2.5 2.5 0 0 1 1186.6 647" stroke="#ffe600" stroke-width="1.6" fill="none"/>
<path d="M1181.6 652A2.5 2.5 0 0 0 1186.6 652" stroke="#ffe600" stroke-width="1.6" fill="none"/>
<path d="M1202.6 647A2.5 2.5 0 0 1 1207.6 647" stroke="#ffe600" stroke-width="1.6" fill="none"/>
<path d="M1202.6 652A2.5 2.5 0 0 0 1207.6 652" stroke="#ffe600" stroke-width="1.6" fill="none"/>
<path d="M1182.1 659V665.5H1207.1V659M1194.6 659V665.5" stroke="#00e800" stroke-width="1.3" fill="none"/>
<path d="M1010 646V652H1017V646" stroke="#00e800" stroke-width="1.2" fill="none"/>
<path d="M1041 646V652H1055V646" stroke="#00e800" stroke-width="1.2" fill="none"/>
<path d="M1091 646V652H1098V646" stroke="#00e800" stroke-width="1.2" fill="none"/>
<rect x="1044.5" y="447" width="19.5" height="8" stroke="#00e8f8" stroke-width="1.6" fill="none"/>
<circle cx="1046.8" cy="449.8" r="1.8" stroke="#ffe600" stroke-width="1.6" fill="none"/>
<circle cx="1061.5" cy="449.8" r="1.8" stroke="#ffe600" stroke-width="1.6" fill="none"/>
<path d="M1043 440V436H1065V440M1054 436V444" stroke="#00e800" stroke-width="1.4" fill="none"/>
<path d="M1070 446H1079V452H1070Z" stroke="#00e800" stroke-width="1.6" fill="none"/>
<path d="M1003 483.6L1110 483.6" stroke="#00e8f8" stroke-width="1.2"/>
<circle cx="795.9" cy="682.7" r="7.6" stroke="#f28070" stroke-width="1.2" fill="none"/>
<path d="M788.3 682.7L803.5 682.7" stroke="#f28070" stroke-width="0.8"/>
<path d="M788.3 682.7H778.4V650" stroke="#f28070" stroke-width="1.2" fill="none"/>
<circle cx="830.5" cy="682.7" r="7.6" stroke="#f28070" stroke-width="1.2" fill="none"/>
<path d="M822.9 682.7L838.1 682.7" stroke="#f28070" stroke-width="0.8"/>
<path d="M822.9 682.7H809.4V652" stroke="#f28070" stroke-width="1.2" fill="none"/>
<circle cx="874.6" cy="682.7" r="7.6" stroke="#f28070" stroke-width="1.2" fill="none"/>
<path d="M867.0 682.7L882.2 682.7" stroke="#f28070" stroke-width="0.8"/>
<path d="M867.0 682.7H848.9V659.5" stroke="#f28070" stroke-width="1.2" fill="none"/>
<circle cx="940.4" cy="682.7" r="7.6" stroke="#f28070" stroke-width="1.2" fill="none"/>
<path d="M932.8 682.7L948.0 682.7" stroke="#f28070" stroke-width="0.8"/>
<path d="M932.8 682.7H918V659.5" stroke="#f28070" stroke-width="1.2" fill="none"/>
<circle cx="1044.3" cy="682.7" r="7.6" stroke="#f28070" stroke-width="1.2" fill="none"/>
<path d="M1036.7 682.7L1051.8999999999999 682.7" stroke="#f28070" stroke-width="0.8"/>
<path d="M1036.7 682.7H1019.5V652" stroke="#f28070" stroke-width="1.2" fill="none"/>
<circle cx="1080.6" cy="682.7" r="7.6" stroke="#f28070" stroke-width="1.2" fill="none"/>
<path d="M1073.0 682.7L1088.1999999999998 682.7" stroke="#f28070" stroke-width="0.8"/>
<path d="M1073.0 682.7H1057.9V646.7" stroke="#f28070" stroke-width="1.2" fill="none"/>
<circle cx="974" cy="377" r="7.6" stroke="#f28070" stroke-width="1.2" fill="none"/>
<path d="M966.4 377L981.6 377" stroke="#f28070" stroke-width="0.8"/>
<path d="M966.4 377H951V415" stroke="#f28070" stroke-width="1.2" fill="none"/>
<circle cx="1086.4" cy="377" r="7.6" stroke="#f28070" stroke-width="1.2" fill="none"/>
<path d="M1078.8000000000002 377L1094.0 377" stroke="#f28070" stroke-width="0.8"/>
<path d="M1078.8000000000002 377H1068V415" stroke="#f28070" stroke-width="1.2" fill="none"/>
<rect x="949" y="405" width="4" height="10" stroke="#f28070" stroke-width="1" fill="none"/>
<rect x="1066" y="405" width="4" height="10" stroke="#f28070" stroke-width="1" fill="none"/>
<circle cx="832.6" cy="486.5" r="7.6" stroke="#f28070" stroke-width="1.2" fill="none"/>
<path d="M825.0 486.5L840.2 486.5" stroke="#f28070" stroke-width="0.8"/>
<path d="M825.0 486.5H853V486.5" stroke="#f28070" stroke-width="1.2" fill="none"/>
<circle cx="832.6" cy="504.5" r="7.6" stroke="#f28070" stroke-width="1.2" fill="none"/>
<path d="M825.0 504.5L840.2 504.5" stroke="#f28070" stroke-width="0.8"/>
<path d="M825.0 504.5H853V504.5" stroke="#f28070" stroke-width="1.2" fill="none"/>
<circle cx="1037.8" cy="498.7" r="7.6" stroke="#f28070" stroke-width="1.2" fill="none"/>
<path d="M1030.2 498.7L1045.3999999999999 498.7" stroke="#f28070" stroke-width="0.8"/>
<path d="M1030.2 498.7H988.4V527" stroke="#f28070" stroke-width="1.2" fill="none"/>
<circle cx="1123.6" cy="498.7" r="7.6" stroke="#f28070" stroke-width="1.2" fill="none"/>
<path d="M1116.0 498.7L1131.1999999999998 498.7" stroke="#f28070" stroke-width="0.8"/>
<path d="M1116.0 498.7H1109V527" stroke="#f28070" stroke-width="1.2" fill="none"/>
<circle cx="1299.3" cy="451.1" r="7.6" stroke="#f28070" stroke-width="1.2" fill="none"/>
<path d="M1291.7 451.1L1306.8999999999999 451.1" stroke="#f28070" stroke-width="0.8"/>
<path d="M1291.7 451.1H1276V497" stroke="#f28070" stroke-width="1.2" fill="none"/>
<circle cx="1313.5" cy="468" r="7.6" stroke="#f28070" stroke-width="1.2" fill="none"/>
<path d="M1305.9 468L1321.1 468" stroke="#f28070" stroke-width="0.8"/>
<path d="M1305.9 468H1294V497" stroke="#f28070" stroke-width="1.2" fill="none"/>
<circle cx="1267.5" cy="487" r="7.6" stroke="#f28070" stroke-width="1.2" fill="none"/>
<path d="M1259.9 487L1275.1 487" stroke="#f28070" stroke-width="0.8"/>
<path d="M1259.9 487H1262V487" stroke="#f28070" stroke-width="1.2" fill="none"/>
<circle cx="1355" cy="575" r="7.6" stroke="#f28070" stroke-width="1.2" fill="none"/>
<path d="M1347.4 575L1362.6 575" stroke="#f28070" stroke-width="0.8"/>
<path d="M1347.4 575H1337V575" stroke="#f28070" stroke-width="1.2" fill="none"/>
<circle cx="1072.5" cy="498.7" r="7.6" stroke="#f28070" stroke-width="1.2" fill="none"/>
<path d="M1064.9 498.7L1080.1 498.7" stroke="#f28070" stroke-width="0.8"/>
<path d="M1080.1 498.7H1092.6V527" stroke="#f28070" stroke-width="1.2" fill="none"/>
<path d="M1306.5 546L1306.5 580" stroke="#ff9a00" stroke-width="1.2"/>
<path d="M1306.5 580L1333 580" stroke="#ff9a00" stroke-width="1.2"/>
<path d="M1308 649.8L1335 649.8" stroke="#e8e8e8" stroke-width="1.4"/>
<circle cx="1334.8" cy="518.5" r="1.6" stroke="#ffe600" stroke-width="1.2" fill="none"/>
<circle cx="1334.8" cy="650" r="1.6" stroke="#ffe600" stroke-width="1.2" fill="none"/>
<circle cx="1295" cy="639" r="1.6" stroke="#ffe600" stroke-width="1.2" fill="none"/>
<circle cx="1306" cy="639" r="1.6" stroke="#ffe600" stroke-width="1.2" fill="none"/>
<circle cx="1064.8" cy="555.5" r="10.2" stroke="#e8e8e8" stroke-width="1.3" fill="none"/>
<path d="M1211.6 593L1214.7 612.4L1269.5 607.8V601" stroke="#e8e8e8" stroke-width="1.3" fill="none"/>
<path d="M932.5 419H927.5V437" stroke="#00d400" stroke-width="1.2" fill="none"/>
<path d="M1185 419H1180V437" stroke="#00d400" stroke-width="1.2" fill="none"/>
<path d="M1070 520H1065V538" stroke="#00d400" stroke-width="1.2" fill="none"/>
<path d="M706.5 303V294.6H725V303" stroke="#64c84a" stroke-width="1.2" fill="none"/>
<text x="716" y="293" fill="#e6e6e6" font-size="4.5" text-anchor="middle">200</text>
<path d="M682 306.5H725.5V312H707V337H698V312H682" stroke="#e8e8e8" stroke-width="1.5" fill="none"/>
<path d="M682 308.2L724 308.2" stroke="#ff2020" stroke-width="1.6"/>
<rect x="726" y="303" width="7" height="7" stroke="#64c84a" stroke-width="1" fill="none"/>
<path d="M681 300L681 318" stroke="#64c84a" stroke-width="1"/>
<path d="M676 322H686V312" stroke="#7090ff" stroke-width="1.1" fill="none"/>
<text x="677" y="320.6" fill="#7090ff" font-size="4" text-anchor="start" textLength="9" lengthAdjust="spacingAndGlyphs">说明</text>
<path d="M707 314H713V320H727" stroke="#7090ff" stroke-width="1.1" fill="none"/>
<text x="714" y="319.6" fill="#7090ff" font-size="4" text-anchor="start" textLength="13" lengthAdjust="spacingAndGlyphs">说明配</text>
<path d="M703 327H717V315" stroke="#7090ff" stroke-width="1.1" fill="none"/>
<text x="708" y="327.6" fill="#7090ff" font-size="4" text-anchor="start" textLength="10" lengthAdjust="spacingAndGlyphs">说明</text>
<path d="M697 337H712" stroke="#64c84a" stroke-width="1" fill="none"/>
<text x="692" y="343.0" fill="#e8e070" font-size="5" text-anchor="start" textLength="24" lengthAdjust="spacingAndGlyphs">说明配筋</text>
<path d="M689.7 348.9L718.3 348.9" stroke="#e8e070" stroke-width="1.6"/>
<path d="M706.5 370V361.6H725V370" stroke="#64c84a" stroke-width="1.2" fill="none"/>
<text x="716" y="360" fill="#e6e6e6" font-size="4.5" text-anchor="middle">200x1x1000</text>
<path d="M682 373.5H725.5V379H707V404H698V379H682" stroke="#e8e8e8" stroke-width="1.5" fill="none"/>
<path d="M682 375.2L724 375.2" stroke="#ff2020" stroke-width="1.6"/>
<rect x="726" y="370" width="7" height="7" stroke="#64c84a" stroke-width="1" fill="none"/>
<path d="M681 367L681 385" stroke="#64c84a" stroke-width="1"/>
<path d="M676 389H686V379" stroke="#7090ff" stroke-width="1.1" fill="none"/>
<text x="677" y="387.6" fill="#7090ff" font-size="4" text-anchor="start" textLength="9" lengthAdjust="spacingAndGlyphs">说明</text>
<path d="M707 381H713V387H727" stroke="#7090ff" stroke-width="1.1" fill="none"/>
<text x="714" y="386.6" fill="#7090ff" font-size="4" text-anchor="start" textLength="13" lengthAdjust="spacingAndGlyphs">说明配</text>
<path d="M703 394H717V382" stroke="#7090ff" stroke-width="1.1" fill="none"/>
<text x="708" y="394.6" fill="#7090ff" font-size="4" text-anchor="start" textLength="10" lengthAdjust="spacingAndGlyphs">说明</text>
<path d="M697 404H712" stroke="#64c84a" stroke-width="1" fill="none"/>
<text x="692" y="410.0" fill="#e8e070" font-size="5" text-anchor="start" textLength="24" lengthAdjust="spacingAndGlyphs">说明配筋</text>
<path d="M689.7 415.9L718.3 415.9" stroke="#e8e070" stroke-width="1.6"/>
<path d="M1354.4 306.7H1407.8M1354.4 313.7H1370.3M1383.3 313.7H1407.8" stroke="#e8e8e8" stroke-width="1.5" fill="none"/>
<path d="M1357 307.7L1405 307.7" stroke="#ff2020" stroke-width="1.8"/>
<rect x="1370.3" y="313.7" width="13" height="11.5" stroke="#e8e8e8" stroke-width="1.5" fill="none"/>
<path d="M1370.3 313.7L1383.3 325.2M1383.3 313.7L1370.3 325.2" stroke="#e8e8e8" stroke-width="0.9" fill="none"/>
<path d="M1357 302.7L1357 316.7" stroke="#e8e8e8" stroke-width="1.1"/>
<path d="M1406 302.7L1406 316.7" stroke="#e8e8e8" stroke-width="1.1"/>
<path d="M1353 310.2L1358 310.2" stroke="#e8e8e8" stroke-width="1.2"/>
<path d="M1405 310.2L1410 310.2" stroke="#e8e8e8" stroke-width="1.2"/>
<path d="M1378 307.7V300.7M1375 300.7H1382" stroke="#00e800" stroke-width="1.4" fill="none"/>
<path d="M1370 307.7L1383 311.7" stroke="#ff2020" stroke-width="1.2"/>
<text x="1353" y="335.59999999999997" fill="#e8e070" font-size="5.5" text-anchor="start" textLength="55" lengthAdjust="spacingAndGlyphs">说明配筋详见图纸要求</text>
<path d="M1352.4 338.4L1409 338.4" stroke="#e8e070" stroke-width="1.6"/>
<text x="1356" y="345.59999999999997" fill="#7090ff" font-size="5" text-anchor="start" textLength="47" lengthAdjust="spacingAndGlyphs">说明配筋详见图纸要</text>
<text x="1361" y="352.79999999999995" fill="#7090ff" font-size="5" text-anchor="start" textLength="55" lengthAdjust="spacingAndGlyphs">说明配筋详见图纸要求施</text>
<path d="M1354.4 387.5H1407.8M1354.4 394.5H1370.3M1383.3 394.5H1407.8" stroke="#e8e8e8" stroke-width="1.5" fill="none"/>
<path d="M1357 388.5L1405 388.5" stroke="#ff2020" stroke-width="1.8"/>
<rect x="1370.3" y="394.5" width="13" height="11.5" stroke="#e8e8e8" stroke-width="1.5" fill="none"/>
<path d="M1370.3 394.5L1383.3 406.0M1383.3 394.5L1370.3 406.0" stroke="#e8e8e8" stroke-width="0.9" fill="none"/>
<path d="M1357 383.5L1357 397.5" stroke="#e8e8e8" stroke-width="1.1"/>
<path d="M1406 383.5L1406 397.5" stroke="#e8e8e8" stroke-width="1.1"/>
<path d="M1353 391.0L1358 391.0" stroke="#e8e8e8" stroke-width="1.2"/>
<path d="M1405 391.0L1410 391.0" stroke="#e8e8e8" stroke-width="1.2"/>
<path d="M1370 387.5V369.5H1378V387.5" stroke="#e8e8e8" stroke-width="1.5" fill="none"/>
<rect x="1370.5" y="369.5" width="7" height="18" fill="#e8e8e8" opacity="0.9"/>
<path d="M1371 368.5V363.5H1378V368.5" stroke="#00e800" stroke-width="1.3" fill="none"/>
<path d="M1371 388.5V399.5L1375 403.5" stroke="#ff2020" stroke-width="1.3" fill="none"/>
<text x="1353" y="416.4" fill="#e8e070" font-size="5.5" text-anchor="start" textLength="55" lengthAdjust="spacingAndGlyphs">说明配筋详见图纸要求</text>
<path d="M1352.4 419.2L1409 419.2" stroke="#e8e070" stroke-width="1.6"/>
<text x="1356" y="426.4" fill="#7090ff" font-size="5" text-anchor="start" textLength="48" lengthAdjust="spacingAndGlyphs">说明配筋详见图纸要</text>
<rect x="1482.1" y="292.7" width="100.3" height="255.2" stroke="#64c84a" stroke-width="1.4" fill="none"/>
<path d="M1499.4 292.7L1499.4 547.9" stroke="#64c84a" stroke-width="1.3"/>
<path d="M1523.5 292.7L1523.5 547.9" stroke="#64c84a" stroke-width="1.3"/>
<path d="M1547.7 292.7L1547.7 547.9" stroke="#64c84a" stroke-width="1.3"/>
<path d="M1482.1 301.01L1547.7 301.01" stroke="#64c84a" stroke-width="1.3"/>
<path d="M1482.1 309.32L1547.7 309.32" stroke="#64c84a" stroke-width="1.3"/>
<path d="M1482.1 317.63L1547.7 317.63" stroke="#64c84a" stroke-width="1.3"/>
<path d="M1482.1 325.94L1547.7 325.94" stroke="#64c84a" stroke-width="1.3"/>
<path d="M1482.1 334.25L1547.7 334.25" stroke="#64c84a" stroke-width="1.3"/>
<path d="M1482.1 342.56L1547.7 342.56" stroke="#64c84a" stroke-width="1.3"/>
<path d="M1482.1 350.87L1547.7 350.87" stroke="#64c84a" stroke-width="1.3"/>
<path d="M1482.1 359.18L1547.7 359.18" stroke="#64c84a" stroke-width="1.3"/>
<path d="M1482.1 367.49L1547.7 367.49" stroke="#64c84a" stroke-width="1.3"/>
<path d="M1482.1 375.8L1547.7 375.8" stroke="#64c84a" stroke-width="1.3"/>
<path d="M1482.1 384.11L1547.7 384.11" stroke="#64c84a" stroke-width="1.3"/>
<path d="M1482.1 392.41999999999996L1547.7 392.41999999999996" stroke="#64c84a" stroke-width="1.3"/>
<path d="M1482.1 400.73L1547.7 400.73" stroke="#64c84a" stroke-width="1.3"/>
<path d="M1482.1 409.03999999999996L1547.7 409.03999999999996" stroke="#64c84a" stroke-width="1.3"/>
<path d="M1482.1 417.35L1547.7 417.35" stroke="#64c84a" stroke-width="1.3"/>
<path d="M1482.1 425.65999999999997L1547.7 425.65999999999997" stroke="#64c84a" stroke-width="1.3"/>
<path d="M1482.1 433.97L1547.7 433.97" stroke="#64c84a" stroke-width="1.3"/>
<path d="M1482.1 442.28L1547.7 442.28" stroke="#64c84a" stroke-width="1.3"/>
<path d="M1482.1 450.59000000000003L1547.7 450.59000000000003" stroke="#64c84a" stroke-width="1.3"/>
<path d="M1482.1 458.9L1547.7 458.9" stroke="#64c84a" stroke-width="1.3"/>
<path d="M1482.1 467.21000000000004L1547.7 467.21000000000004" stroke="#64c84a" stroke-width="1.3"/>
<path d="M1482.1 475.52L1547.7 475.52" stroke="#64c84a" stroke-width="1.3"/>
<path d="M1482.1 483.83000000000004L1547.7 483.83000000000004" stroke="#64c84a" stroke-width="1.3"/>
<path d="M1482.1 492.14L1547.7 492.14" stroke="#64c84a" stroke-width="1.3"/>
<path d="M1482.1 500.45L1547.7 500.45" stroke="#64c84a" stroke-width="1.3"/>
<path d="M1482.1 508.76L1547.7 508.76" stroke="#64c84a" stroke-width="1.3"/>
<path d="M1482.1 517.0699999999999L1547.7 517.0699999999999" stroke="#64c84a" stroke-width="1.3"/>
<path d="M1482.1 525.38L1547.7 525.38" stroke="#64c84a" stroke-width="1.3"/>
<path d="M1482.1 533.69L1547.7 533.69" stroke="#64c84a" stroke-width="1.3"/>
<path d="M1547.7 375.8L1564.3 375.8" stroke="#64c84a" stroke-width="1.3"/>
<path d="M1547.7 392.41999999999996L1564.3 392.41999999999996" stroke="#64c84a" stroke-width="1.3"/>
<path d="M1547.7 433.97L1564.3 433.97" stroke="#64c84a" stroke-width="1.3"/>
<path d="M1547.7 467.21000000000004L1564.3 467.21000000000004" stroke="#64c84a" stroke-width="1.3"/>
<path d="M1547.7 533.69L1564.3 533.69" stroke="#64c84a" stroke-width="1.3"/>
<path d="M1564.3 292.7L1564.3 547.9" stroke="#64c84a" stroke-width="1.3"/>
<path d="M1564.3 297.01L1582.4 297.01" stroke="#64c84a" stroke-width="1.2"/>
<path d="M1564.3 305.32L1582.4 305.32" stroke="#64c84a" stroke-width="1.2"/>
<path d="M1564.3 313.63L1582.4 313.63" stroke="#64c84a" stroke-width="1.2"/>
<path d="M1564.3 321.94L1582.4 321.94" stroke="#64c84a" stroke-width="1.2"/>
<path d="M1564.3 330.25L1582.4 330.25" stroke="#64c84a" stroke-width="1.2"/>
<path d="M1564.3 338.56L1582.4 338.56" stroke="#64c84a" stroke-width="1.2"/>
<path d="M1564.3 346.87L1582.4 346.87" stroke="#64c84a" stroke-width="1.2"/>
<path d="M1564.3 355.18L1582.4 355.18" stroke="#64c84a" stroke-width="1.2"/>
<path d="M1564.3 363.49L1582.4 363.49" stroke="#64c84a" stroke-width="1.2"/>
<path d="M1564.3 371.8L1582.4 371.8" stroke="#64c84a" stroke-width="1.2"/>
<path d="M1564.3 380.11L1582.4 380.11" stroke="#64c84a" stroke-width="1.2"/>
<path d="M1564.3 388.41999999999996L1582.4 388.41999999999996" stroke="#64c84a" stroke-width="1.2"/>
<path d="M1564.3 396.73L1582.4 396.73" stroke="#64c84a" stroke-width="1.2"/>
<path d="M1564.3 405.03999999999996L1582.4 405.03999999999996" stroke="#64c84a" stroke-width="1.2"/>
<path d="M1564.3 413.35L1582.4 413.35" stroke="#64c84a" stroke-width="1.2"/>
<path d="M1564.3 421.65999999999997L1582.4 421.65999999999997" stroke="#64c84a" stroke-width="1.2"/>
<path d="M1564.3 429.97L1582.4 429.97" stroke="#64c84a" stroke-width="1.2"/>
<path d="M1564.3 438.28L1582.4 438.28" stroke="#64c84a" stroke-width="1.2"/>
<path d="M1564.3 446.59000000000003L1582.4 446.59000000000003" stroke="#64c84a" stroke-width="1.2"/>
<path d="M1564.3 454.9L1582.4 454.9" stroke="#64c84a" stroke-width="1.2"/>
<path d="M1564.3 463.21000000000004L1582.4 463.21000000000004" stroke="#64c84a" stroke-width="1.2"/>
<path d="M1564.3 471.52L1582.4 471.52" stroke="#64c84a" stroke-width="1.2"/>
<path d="M1564.3 479.83000000000004L1582.4 479.83000000000004" stroke="#64c84a" stroke-width="1.2"/>
<path d="M1564.3 488.14L1582.4 488.14" stroke="#64c84a" stroke-width="1.2"/>
<path d="M1564.3 496.45L1582.4 496.45" stroke="#64c84a" stroke-width="1.2"/>
<path d="M1564.3 504.76L1582.4 504.76" stroke="#64c84a" stroke-width="1.2"/>
<path d="M1564.3 513.0699999999999L1582.4 513.0699999999999" stroke="#64c84a" stroke-width="1.2"/>
<path d="M1564.3 521.38L1582.4 521.38" stroke="#64c84a" stroke-width="1.2"/>
<path d="M1564.3 529.69L1582.4 529.69" stroke="#64c84a" stroke-width="1.2"/>
<path d="M1547.7 533.69L1582.4 533.69" stroke="#64c84a" stroke-width="1.3"/>
<path d="M1523.5 301.01L1547.7 292.7" stroke="#64c84a" stroke-width="1.2"/>
<text x="1490.7" y="298.7" fill="#e6e6e6" font-size="4.5" text-anchor="middle">屋面</text>
<text x="1511.4" y="298.7" fill="#ff3030" font-size="4.5" text-anchor="middle">72.000</text>
<text x="1535.6" y="298.7" fill="#ff3030" font-size="4.5" text-anchor="middle"></text>
<text x="1573" y="298.7" fill="#e6e6e6" font-size="4.2" text-anchor="middle">C35</text>
<text x="1490.7" y="307.01" fill="#e6e6e6" font-size="4.5" text-anchor="middle">层高</text>
<text x="1511.4" y="307.01" fill="#e6e6e6" font-size="4.5" text-anchor="middle">69.200</text>
<text x="1535.6" y="307.01" fill="#ff3030" font-size="4.5" text-anchor="middle">4.000</text>
<text x="1573" y="307.01" fill="#e6e6e6" font-size="4.2" text-anchor="middle">C35</text>
<text x="1490.7" y="315.32" fill="#e6e6e6" font-size="4.5" text-anchor="middle">27</text>
<text x="1511.4" y="315.32" fill="#e6e6e6" font-size="4.5" text-anchor="middle">66.400</text>
<text x="1535.6" y="315.32" fill="#e6e6e6" font-size="4.5" text-anchor="middle">2.800</text>
<text x="1573" y="315.32" fill="#e6e6e6" font-size="4.2" text-anchor="middle">C35</text>
<text x="1490.7" y="323.63" fill="#e6e6e6" font-size="4.5" text-anchor="middle">26</text>
<text x="1511.4" y="323.63" fill="#e6e6e6" font-size="4.5" text-anchor="middle">63.600</text>
<text x="1535.6" y="323.63" fill="#e6e6e6" font-size="4.5" text-anchor="middle">2.800</text>
<text x="1573" y="323.63" fill="#e6e6e6" font-size="4.2" text-anchor="middle">C35</text>
<text x="1490.7" y="331.94" fill="#e6e6e6" font-size="4.5" text-anchor="middle">25</text>
<text x="1511.4" y="331.94" fill="#e6e6e6" font-size="4.5" text-anchor="middle">60.800</text>
<text x="1535.6" y="331.94" fill="#e6e6e6" font-size="4.5" text-anchor="middle">2.800</text>
<text x="1573" y="331.94" fill="#e6e6e6" font-size="4.2" text-anchor="middle">C35</text>
<text x="1490.7" y="340.25" fill="#e6e6e6" font-size="4.5" text-anchor="middle">24</text>
<text x="1511.4" y="340.25" fill="#e6e6e6" font-size="4.5" text-anchor="middle">58.000</text>
<text x="1535.6" y="340.25" fill="#e6e6e6" font-size="4.5" text-anchor="middle">2.800</text>
<text x="1573" y="340.25" fill="#e6e6e6" font-size="4.2" text-anchor="middle">C35</text>
<text x="1490.7" y="348.56" fill="#e6e6e6" font-size="4.5" text-anchor="middle">23</text>
<text x="1511.4" y="348.56" fill="#e6e6e6" font-size="4.5" text-anchor="middle">55.200</text>
<text x="1535.6" y="348.56" fill="#e6e6e6" font-size="4.5" text-anchor="middle">2.800</text>
<text x="1573" y="348.56" fill="#e6e6e6" font-size="4.2" text-anchor="middle">C35</text>
<text x="1490.7" y="356.87" fill="#e6e6e6" font-size="4.5" text-anchor="middle">22</text>
<text x="1511.4" y="356.87" fill="#e6e6e6" font-size="4.5" text-anchor="middle">52.400</text>
<text x="1535.6" y="356.87" fill="#e6e6e6" font-size="4.5" text-anchor="middle">2.800</text>
<text x="1573" y="356.87" fill="#e6e6e6" font-size="4.2" text-anchor="middle">C35</text>
<text x="1490.7" y="365.18" fill="#e6e6e6" font-size="4.5" text-anchor="middle">21</text>
<text x="1511.4" y="365.18" fill="#e6e6e6" font-size="4.5" text-anchor="middle">49.600</text>
<text x="1535.6" y="365.18" fill="#e6e6e6" font-size="4.5" text-anchor="middle">2.800</text>
<text x="1573" y="365.18" fill="#e6e6e6" font-size="4.2" text-anchor="middle">C35</text>
<text x="1490.7" y="373.49" fill="#e6e6e6" font-size="4.5" text-anchor="middle">20</text>
<text x="1511.4" y="373.49" fill="#e6e6e6" font-size="4.5" text-anchor="middle">46.800</text>
<text x="1535.6" y="373.49" fill="#e6e6e6" font-size="4.5" text-anchor="middle">2.800</text>
<text x="1573" y="373.49" fill="#e6e6e6" font-size="4.2" text-anchor="middle">C35</text>
<text x="1490.7" y="381.8" fill="#e6e6e6" font-size="4.5" text-anchor="middle">19</text>
<text x="1511.4" y="381.8" fill="#e6e6e6" font-size="4.5" text-anchor="middle">44.000</text>
<text x="1535.6" y="381.8" fill="#e6e6e6" font-size="4.5" text-anchor="middle">2.800</text>
<text x="1573" y="381.8" fill="#e6e6e6" font-size="4.2" text-anchor="middle">C35</text>
<text x="1490.7" y="390.11" fill="#e6e6e6" font-size="4.5" text-anchor="middle">18</text>
<text x="1511.4" y="390.11" fill="#e6e6e6" font-size="4.5" text-anchor="middle">41.200</text>
<text x="1535.6" y="390.11" fill="#e6e6e6" font-size="4.5" text-anchor="middle">2.800</text>
<text x="1573" y="390.11" fill="#e6e6e6" font-size="4.2" text-anchor="middle">C35</text>
<text x="1490.7" y="398.41999999999996" fill="#e6e6e6" font-size="4.5" text-anchor="middle">17</text>
<text x="1511.4" y="398.41999999999996" fill="#e6e6e6" font-size="4.5" text-anchor="middle">38.400</text>
<text x="1535.6" y="398.41999999999996" fill="#e6e6e6" font-size="4.5" text-anchor="middle">2.800</text>
<text x="1573" y="398.41999999999996" fill="#e6e6e6" font-size="4.2" text-anchor="middle">C35</text>
<text x="1490.7" y="406.73" fill="#e6e6e6" font-size="4.5" text-anchor="middle">16</text>
<text x="1511.4" y="406.73" fill="#e6e6e6" font-size="4.5" text-anchor="middle">35.600</text>
<text x="1535.6" y="406.73" fill="#e6e6e6" font-size="4.5" text-anchor="middle">2.800</text>
<text x="1573" y="406.73" fill="#e6e6e6" font-size="4.2" text-anchor="middle">C35</text>
<text x="1490.7" y="415.03999999999996" fill="#e6e6e6" font-size="4.5" text-anchor="middle">15</text>
<text x="1511.4" y="415.03999999999996" fill="#e6e6e6" font-size="4.5" text-anchor="middle">32.800</text>
<text x="1535.6" y="415.03999999999996" fill="#e6e6e6" font-size="4.5" text-anchor="middle">2.800</text>
<text x="1573" y="415.03999999999996" fill="#e6e6e6" font-size="4.2" text-anchor="middle">C35</text>
<text x="1490.7" y="423.35" fill="#e6e6e6" font-size="4.5" text-anchor="middle">14</text>
<text x="1511.4" y="423.35" fill="#e6e6e6" font-size="4.5" text-anchor="middle">30.000</text>
<text x="1535.6" y="423.35" fill="#e6e6e6" font-size="4.5" text-anchor="middle">2.800</text>
<text x="1573" y="423.35" fill="#e6e6e6" font-size="4.2" text-anchor="middle">C35</text>
<text x="1490.7" y="431.65999999999997" fill="#e6e6e6" font-size="4.5" text-anchor="middle">13</text>
<text x="1511.4" y="431.65999999999997" fill="#e6e6e6" font-size="4.5" text-anchor="middle">27.200</text>
<text x="1535.6" y="431.65999999999997" fill="#e6e6e6" font-size="4.5" text-anchor="middle">2.800</text>
<text x="1573" y="431.65999999999997" fill="#e6e6e6" font-size="4.2" text-anchor="middle">C35</text>
<text x="1490.7" y="439.97" fill="#e6e6e6" font-size="4.5" text-anchor="middle">12</text>
<text x="1511.4" y="439.97" fill="#e6e6e6" font-size="4.5" text-anchor="middle">24.400</text>
<text x="1535.6" y="439.97" fill="#e6e6e6" font-size="4.5" text-anchor="middle">2.800</text>
<text x="1573" y="439.97" fill="#e6e6e6" font-size="4.2" text-anchor="middle">C35</text>
<text x="1490.7" y="448.28" fill="#e6e6e6" font-size="4.5" text-anchor="middle">11</text>
<text x="1511.4" y="448.28" fill="#e6e6e6" font-size="4.5" text-anchor="middle">21.600</text>
<text x="1535.6" y="448.28" fill="#e6e6e6" font-size="4.5" text-anchor="middle">2.800</text>
<text x="1573" y="448.28" fill="#e6e6e6" font-size="4.2" text-anchor="middle">C35</text>
<text x="1490.7" y="456.59000000000003" fill="#e6e6e6" font-size="4.5" text-anchor="middle">10</text>
<text x="1511.4" y="456.59000000000003" fill="#e6e6e6" font-size="4.5" text-anchor="middle">18.800</text>
<text x="1535.6" y="456.59000000000003" fill="#e6e6e6" font-size="4.5" text-anchor="middle">2.800</text>
<text x="1573" y="456.59000000000003" fill="#e6e6e6" font-size="4.2" text-anchor="middle">C35</text>
<text x="1490.7" y="464.9" fill="#e6e6e6" font-size="4.5" text-anchor="middle">9</text>
<text x="1511.4" y="464.9" fill="#e6e6e6" font-size="4.5" text-anchor="middle">16.000</text>
<text x="1535.6" y="464.9" fill="#e6e6e6" font-size="4.5" text-anchor="middle">2.800</text>
<text x="1573" y="464.9" fill="#e6e6e6" font-size="4.2" text-anchor="middle">C35</text>
<text x="1490.7" y="473.21000000000004" fill="#e6e6e6" font-size="4.5" text-anchor="middle">8</text>
<text x="1511.4" y="473.21000000000004" fill="#e6e6e6" font-size="4.5" text-anchor="middle">13.200</text>
<text x="1535.6" y="473.21000000000004" fill="#e6e6e6" font-size="4.5" text-anchor="middle">2.800</text>
<text x="1573" y="473.21000000000004" fill="#e6e6e6" font-size="4.2" text-anchor="middle">C35</text>
<text x="1490.7" y="481.52" fill="#e6e6e6" font-size="4.5" text-anchor="middle">7</text>
<text x="1511.4" y="481.52" fill="#e6e6e6" font-size="4.5" text-anchor="middle">10.400</text>
<text x="1535.6" y="481.52" fill="#e6e6e6" font-size="4.5" text-anchor="middle">2.800</text>
<text x="1573" y="481.52" fill="#e6e6e6" font-size="4.2" text-anchor="middle">C35</text>
<text x="1490.7" y="489.83000000000004" fill="#e6e6e6" font-size="4.5" text-anchor="middle">6</text>
<text x="1511.4" y="489.83000000000004" fill="#e6e6e6" font-size="4.5" text-anchor="middle">7.600</text>
<text x="1535.6" y="489.83000000000004" fill="#e6e6e6" font-size="4.5" text-anchor="middle">2.800</text>
<text x="1573" y="489.83000000000004" fill="#e6e6e6" font-size="4.2" text-anchor="middle">C35</text>
<text x="1490.7" y="498.14" fill="#e6e6e6" font-size="4.5" text-anchor="middle">5</text>
<text x="1511.4" y="498.14" fill="#e6e6e6" font-size="4.5" text-anchor="middle">4.800</text>
<text x="1535.6" y="498.14" fill="#e6e6e6" font-size="4.5" text-anchor="middle">2.800</text>
<text x="1573" y="498.14" fill="#e6e6e6" font-size="4.2" text-anchor="middle">C35</text>
<text x="1490.7" y="506.45" fill="#e6e6e6" font-size="4.5" text-anchor="middle">4</text>
<text x="1511.4" y="506.45" fill="#e6e6e6" font-size="4.5" text-anchor="middle">2.000</text>
<text x="1535.6" y="506.45" fill="#e6e6e6" font-size="4.5" text-anchor="middle">2.800</text>
<text x="1573" y="506.45" fill="#e6e6e6" font-size="4.2" text-anchor="middle">C35</text>
<text x="1490.7" y="514.76" fill="#e6e6e6" font-size="4.5" text-anchor="middle">3</text>
<text x="1511.4" y="514.76" fill="#e6e6e6" font-size="4.5" text-anchor="middle">-0.050</text>
<text x="1535.6" y="514.76" fill="#e6e6e6" font-size="4.5" text-anchor="middle">2.800</text>
<text x="1573" y="514.76" fill="#e6e6e6" font-size="4.2" text-anchor="middle">C35</text>
<text x="1490.7" y="523.0699999999999" fill="#e6e6e6" font-size="4.5" text-anchor="middle">2</text>
<text x="1511.4" y="523.0699999999999" fill="#e6e6e6" font-size="4.5" text-anchor="middle">-4.500</text>
<text x="1535.6" y="523.0699999999999" fill="#e6e6e6" font-size="4.5" text-anchor="middle">2.800</text>
<text x="1573" y="523.0699999999999" fill="#e6e6e6" font-size="4.2" text-anchor="middle">C35</text>
<text x="1490.7" y="531.38" fill="#e6e6e6" font-size="4.5" text-anchor="middle">1</text>
<text x="1511.4" y="531.38" fill="#e6e6e6" font-size="4.5" text-anchor="middle">72.000</text>
<text x="1535.6" y="531.38" fill="#e6e6e6" font-size="4.5" text-anchor="middle">2.800</text>
<text x="1573" y="531.38" fill="#e6e6e6" font-size="4.2" text-anchor="middle">C35</text>
<text x="1556" y="336.25" fill="#e6e6e6" font-size="4.5" text-anchor="middle">C35</text>
<text x="1556" y="386.11" fill="#e6e6e6" font-size="4.5" text-anchor="middle">C40</text>
<text x="1556" y="415.195" fill="#e6e6e6" font-size="4.5" text-anchor="middle">C30</text>
<text x="1556" y="452.59000000000003" fill="#e6e6e6" font-size="4.5" text-anchor="middle">C40</text>
<text x="1556" y="502.45" fill="#e6e6e6" font-size="4.5" text-anchor="middle">C45</text>
<text x="1490.7" y="541" fill="#e6e6e6" font-size="4.5" text-anchor="middle">层号</text>
<text x="1511.4" y="541" fill="#e6e6e6" font-size="4" text-anchor="middle">层面标高(m)</text>
<text x="1535.6" y="541" fill="#e6e6e6" font-size="4" text-anchor="middle">层高(m)</text>
<text x="1556" y="538" fill="#e6e6e6" font-size="4" text-anchor="middle">墙、柱</text>
<text x="1556" y="545" fill="#e6e6e6" font-size="4" text-anchor="middle">混凝土</text>
<text x="1573" y="538" fill="#e6e6e6" font-size="4" text-anchor="middle">梁、板</text>
<text x="1573" y="545" fill="#e6e6e6" font-size="4" text-anchor="middle">混凝土</text>
<path d="M1481 500Q1477 500 1477 506V512L1474 515L1477 518V524Q1477 530 1481 530" stroke="#e8e8e8" stroke-width="0.9" fill="none"/>
<text x="0" y="0" fill="#e6e6e6" font-size="4.5" text-anchor="middle" transform="translate(1472,515) rotate(-90)">结构嵌固端</text>
<text x="1515" y="556.0" fill="#e6e6e6" font-size="5" text-anchor="start" textLength="31" lengthAdjust="spacingAndGlyphs">说明配筋详见</text>
<text x="1515" y="564.0" fill="#e6e6e6" font-size="5" text-anchor="start" textLength="31" lengthAdjust="spacingAndGlyphs">说明配筋详见</text>
<text x="1518" y="572.0" fill="#e6e6e6" font-size="5" text-anchor="start" textLength="27" lengthAdjust="spacingAndGlyphs">说明配筋详</text>
<path d="M1511 574.2L1554 574.2" stroke="#e8e8e8" stroke-width="1.3"/>
<text x="1513" y="580.3" fill="#e6e6e6" font-size="4.5" text-anchor="start" textLength="43" lengthAdjust="spacingAndGlyphs">说明配筋详见图纸要</text>
<text x="1515" y="586.3" fill="#e6e6e6" font-size="4.5" text-anchor="start" textLength="35" lengthAdjust="spacingAndGlyphs">说明配筋详见图</text>
<text x="1515" y="591.8" fill="#e6e6e6" font-size="4.5" text-anchor="start" textLength="38" lengthAdjust="spacingAndGlyphs">说明配筋详见图纸</text>
<path d="M1458 628H1487L1489 631" stroke="#f07090" stroke-width="1.3" fill="none"/>
<text x="1459" y="626.0" fill="#f07090" font-size="5" text-anchor="start" textLength="26" lengthAdjust="spacingAndGlyphs">说明配筋详</text>
<rect x="1479" y="631.8" width="34" height="7.9" stroke="#e8e8e8" stroke-width="1.3" fill="none"/>
<rect x="1489" y="632.8" width="15" height="6" stroke="#ff2020" stroke-width="1.8" fill="none"/>
<path d="M1479 631.8H1475V631.8M1479 639.7H1475" stroke="#e8e8e8" stroke-width="1" fill="none"/>
<path d="M1470 631V640M1470 631H1476M1470 640H1476" stroke="#64c84a" stroke-width="1.2" fill="none"/>
<text x="1464" y="637.6" fill="#e6e6e6" font-size="4" text-anchor="start" textLength="5" lengthAdjust="spacingAndGlyphs">说</text>
<path d="M1492 631L1497 622H1518M1499 631L1504 622M1507 631L1511 622" stroke="#7090ff" stroke-width="1.2" fill="none"/>
<path d="M1492 640L1497 644H1525" stroke="#7090ff" stroke-width="1.2" fill="none"/>
<path d="M1513 635H1533" stroke="#7090ff" stroke-width="1.2" fill="none"/>
<text x="1514" y="633.8" fill="#7090ff" font-size="4.5" text-anchor="start" textLength="16" lengthAdjust="spacingAndGlyphs">说明配</text>
<text x="1515" y="619.8" fill="#7090ff" font-size="4.5" text-anchor="start" textLength="13" lengthAdjust="spacingAndGlyphs">说明</text>
<text x="1513" y="643.8" fill="#7090ff" font-size="4.5" text-anchor="start" textLength="12" lengthAdjust="spacingAndGlyphs">说明</text>
<path d="M1487 643V652H1506V643" stroke="#64c84a" stroke-width="1.2" fill="none"/>
<text x="1493" y="650.6" fill="#e6e6e6" font-size="4" text-anchor="start" textLength="8" lengthAdjust="spacingAndGlyphs">说明</text>
<text x="1497" y="660" fill="#e8e070" font-size="6" text-anchor="middle">JL</text>
<path d="M1492 662.5L1502 662.5" stroke="#e8e070" stroke-width="1.4"/>
<text x="1365" y="685.58" fill="#e6e6e6" font-size="5.2" text-anchor="start" textLength="9" lengthAdjust="spacingAndGlyphs">说</text>
<text x="1365" y="694.7800000000001" fill="#e6e6e6" font-size="5.2" text-anchor="start" textLength="160" lengthAdjust="spacingAndGlyphs">说明配筋详见图纸要求施工混凝土结构墙梁板柱说明配筋详见图纸要</text>
<text x="1372" y="703.2800000000001" fill="#e6e6e6" font-size="5.2" text-anchor="start" textLength="109" lengthAdjust="spacingAndGlyphs">说明配筋详见图纸要求施工混凝土结构墙梁板</text>
<text x="1365" y="712.48" fill="#e6e6e6" font-size="5.2" text-anchor="start" textLength="119" lengthAdjust="spacingAndGlyphs">说明配筋详见图纸要求施工混凝土结构墙梁板柱说</text>
<text x="1387" y="721.08" fill="#e6e6e6" font-size="5.2" text-anchor="start" textLength="31" lengthAdjust="spacingAndGlyphs">说明配筋详</text>
<text x="1464" y="721.08" fill="#e6e6e6" font-size="5.2" text-anchor="start" textLength="32" lengthAdjust="spacingAndGlyphs">说明配筋详见</text>
<text x="1387" y="729.7800000000001" fill="#e6e6e6" font-size="5.2" text-anchor="start" textLength="31" lengthAdjust="spacingAndGlyphs">说明配筋详</text>
<text x="1464" y="729.7800000000001" fill="#e6e6e6" font-size="5.2" text-anchor="start" textLength="32" lengthAdjust="spacingAndGlyphs">说明配筋详见</text>
<text x="1365" y="739.38" fill="#e6e6e6" font-size="5.2" text-anchor="start" textLength="48" lengthAdjust="spacingAndGlyphs">说明配筋详见图纸要</text>
<text x="1365" y="748.38" fill="#e6e6e6" font-size="5.2" text-anchor="start" textLength="132" lengthAdjust="spacingAndGlyphs">说明配筋详见图纸要求施工混凝土结构墙梁板柱说明配筋</text>
<text x="1441" y="754.7800000000001" fill="#e6e6e6" font-size="5.2" text-anchor="start" textLength="43" lengthAdjust="spacingAndGlyphs">说明配筋详见图纸</text>
<text x="1384" y="762.08" fill="#e6e6e6" font-size="5.2" text-anchor="start" textLength="37" lengthAdjust="spacingAndGlyphs">说明配筋详见图</text>
<text x="1447" y="762.08" fill="#e6e6e6" font-size="5.2" text-anchor="start" textLength="24" lengthAdjust="spacingAndGlyphs">说明配筋</text>
<text x="1382" y="782.6800000000001" fill="#e6e6e6" font-size="5.2" text-anchor="start" textLength="128" lengthAdjust="spacingAndGlyphs">说明配筋详见图纸要求施工混凝土结构墙梁板柱说明配</text>
<text x="1382" y="791.2800000000001" fill="#e6e6e6" font-size="5.2" text-anchor="start" textLength="119" lengthAdjust="spacingAndGlyphs">说明配筋详见图纸要求施工混凝土结构墙梁板柱说</text>
<text x="1380" y="800.58" fill="#e6e6e6" font-size="5.2" text-anchor="start" textLength="76" lengthAdjust="spacingAndGlyphs">说明配筋详见图纸要求施工混凝</text>
<text x="1380" y="809.08" fill="#e6e6e6" font-size="5.2" text-anchor="start" textLength="119" lengthAdjust="spacingAndGlyphs">说明配筋详见图纸要求施工混凝土结构墙梁板柱说</text>
<text x="1365" y="818.58" fill="#e6e6e6" font-size="5.2" text-anchor="start" textLength="99" lengthAdjust="spacingAndGlyphs">说明配筋详见图纸要求施工混凝土结构墙梁</text>
<text x="1365" y="827.48" fill="#e6e6e6" font-size="5.2" text-anchor="start" textLength="153" lengthAdjust="spacingAndGlyphs">说明配筋详见图纸要求施工混凝土结构墙梁板柱说明配筋详见图纸</text>
<text x="1372" y="835.58" fill="#e6e6e6" font-size="5.2" text-anchor="start" textLength="35" lengthAdjust="spacingAndGlyphs">说明配筋详见</text>
<text x="1365" y="845.08" fill="#e6e6e6" font-size="5.2" text-anchor="start" textLength="164" lengthAdjust="spacingAndGlyphs">说明配筋详见图纸要求施工混凝土结构墙梁板柱说明配筋详见图纸要求</text>
<text x="1365" y="854.38" fill="#e6e6e6" font-size="5.2" text-anchor="start" textLength="60" lengthAdjust="spacingAndGlyphs">说明配筋详见图纸要求施</text>
<rect x="1372" y="715" width="13" height="7" stroke="#e8e8e8" stroke-width="1.2" fill="none"/>
<path d="M1374 721L1378 716M1378 721L1382 716" stroke="#e8e8e8" stroke-width="0.9" fill="none"/>
<rect x="1372" y="724" width="13" height="7" stroke="#e8e8e8" stroke-width="1.2" fill="none"/>
<path d="M1374 730L1378 725M1378 730L1382 725" stroke="#e8e8e8" stroke-width="0.9" fill="none"/>
<rect x="1450" y="715" width="13" height="7" stroke="#e8e8e8" stroke-width="1.2" fill="none"/>
<path d="M1452 721L1456 716M1456 721L1460 716" stroke="#e8e8e8" stroke-width="0.9" fill="none"/>
<rect x="1450" y="724" width="13" height="7" stroke="#e8e8e8" stroke-width="1.2" fill="none"/>
<path d="M1452 730L1456 725M1456 730L1460 725" stroke="#e8e8e8" stroke-width="0.9" fill="none"/>
<path d="M1384 766H1477" stroke="#e8e8e8" stroke-width="1.5" fill="none"/>
<rect x="1416" y="762" width="10" height="7" stroke="#e8e8e8" stroke-width="1.2" fill="none"/>
<rect x="1433" y="764" width="8" height="7" stroke="#e8e8e8" stroke-width="1.2" fill="none"/>
<path d="M1418 765L1422 763L1424 766L1428 764L1432 766" stroke="#ff2020" stroke-width="1.3" fill="none"/>
<path d="M1427 759V773M1429 759V773" stroke="#00e8f8" stroke-width="1.3" fill="none"/>
<path d="M1423 760L1427 758L1430 760M1423 772L1427 774L1430 772" stroke="#00e800" stroke-width="1" fill="none"/>
<text x="1368" y="768" fill="#e6e6e6" font-size="5" text-anchor="start">楼中</text>
<rect x="1372" y="776.5" width="9" height="8" stroke="#e8e8e8" stroke-width="1.3" fill="none"/>
<rect x="1372" y="785" width="9" height="8" stroke="#e8e8e8" stroke-width="1.3" fill="none"/>
<path d="M1373 777.5L1380 783.5M1380 777.5L1373 783.5" stroke="#e8e8e8" stroke-width="0.8" fill="none"/>
<text x="988.5" y="775.5" fill="#e4e4e4" font-size="15.2" text-anchor="start" textLength="89" lengthAdjust="spacingAndGlyphs">三层结构平面图</text>
<text x="1079" y="777.5" fill="#e4e4e4" font-size="9" text-anchor="start">1:100</text>
<path d="M988 782L1079 782" stroke="#e0e0e0" stroke-width="2"/>
<rect x="711.7" y="789.7" width="15.5" height="43.3" stroke="#e8e8e8" stroke-width="1.5" fill="none"/>
<path d="M711.7 789.7L727.2 833M727.2 789.7L711.7 833" stroke="#e8e8e8" stroke-width="0.9" fill="none"/>
<path d="M683 782.5H727.2V789.7" stroke="#e8e8e8" stroke-width="1.4" fill="none"/>
<path d="M683 784L726 784" stroke="#ff2020" stroke-width="1.8"/>
<path d="M683 789.7L712 789.7" stroke="#bdbdbd" stroke-width="1.4"/>
<path d="M683 798.4L727 798.4" stroke="#e8e8e8" stroke-width="1.4"/>
<path d="M684 796.6L726 796.6" stroke="#ff2020" stroke-width="1.6"/>
<path d="M716 784L716 826" stroke="#ff2020" stroke-width="1.4"/>
<path d="M720 784L720 826" stroke="#ff2020" stroke-width="1.4"/>
<path d="M725 784L725 826" stroke="#ff2020" stroke-width="1.4"/>
<path d="M683 773V788L680 790L684 792L683 794V804" stroke="#f07090" stroke-width="1.2" fill="none"/>
<path d="M680 781H667V799H680" stroke="#64c84a" stroke-width="1.3" fill="none"/>
<text x="661" y="791.8" fill="#e6e6e6" font-size="4.5" text-anchor="start" textLength="5" lengthAdjust="spacingAndGlyphs">说</text>
<path d="M730 789H743.5V824H730" stroke="#64c84a" stroke-width="1.3" fill="none"/>
<text x="745" y="807.8" fill="#e6e6e6" font-size="4.5" text-anchor="start" textLength="5" lengthAdjust="spacingAndGlyphs">说</text>
<path d="M711.7 838V844.7H727.2V838" stroke="#64c84a" stroke-width="1.3" fill="none"/>
<text x="715" y="843.8" fill="#e6e6e6" font-size="4.5" text-anchor="start" textLength="9" lengthAdjust="spacingAndGlyphs">说明</text>
<path d="M664 769.6H692L704 782" stroke="#7090ff" stroke-width="1.3" fill="none"/>
<text x="665" y="768.0" fill="#7090ff" font-size="5" text-anchor="start" textLength="25" lengthAdjust="spacingAndGlyphs">说明配筋详</text>
<path d="M762 769.7H736V788H715" stroke="#7090ff" stroke-width="1.3" fill="none"/>
<text x="739" y="768.0" fill="#7090ff" font-size="5" text-anchor="start" textLength="20" lengthAdjust="spacingAndGlyphs">说明配筋</text>
<text x="739" y="776.0" fill="#7090ff" font-size="5" text-anchor="start" textLength="20" lengthAdjust="spacingAndGlyphs">说明配筋</text>
<path d="M670 814.5H697L706 798" stroke="#7090ff" stroke-width="1.3" fill="none"/>
<text x="670" y="813.0" fill="#7090ff" font-size="5" text-anchor="start" textLength="30" lengthAdjust="spacingAndGlyphs">说明配筋详见</text>
<text x="672" y="820.0" fill="#7090ff" font-size="5" text-anchor="start" textLength="19" lengthAdjust="spacingAndGlyphs">说明配</text>
<path d="M701 827.4H718" stroke="#7090ff" stroke-width="1.3" fill="none"/>
<circle cx="718" cy="827.4" r="1.2" stroke="#7090ff" stroke-width="1" fill="#7090ff"/>
<text x="702" y="825.8" fill="#7090ff" font-size="4.5" text-anchor="start" textLength="7" lengthAdjust="spacingAndGlyphs">说</text>
<text x="689" y="853.1" fill="#e8e070" font-size="6" text-anchor="start" textLength="67" lengthAdjust="spacingAndGlyphs">说明配筋详见图纸要求施</text>
<path d="M687 856.8L758.5 856.8" stroke="#e8e070" stroke-width="1.8"/>
<text x="689" y="862.58" fill="#7090ff" font-size="5.2" text-anchor="start" textLength="68" lengthAdjust="spacingAndGlyphs">说明配筋详见图纸要求施工混</text>
<text x="694" y="869.58" fill="#7090ff" font-size="5.2" text-anchor="start" textLength="64" lengthAdjust="spacingAndGlyphs">说明配筋详见图纸要求施工</text>
<path d="M906.9 828H924.4V810H932.5V828H958M925 836.25H958M906.9 836.25H925" stroke="#e8e8e8" stroke-width="1.5" fill="none"/>
<rect x="925" y="810" width="7.5" height="18" fill="#f0f0f0"/>
<rect x="909" y="830.5" width="48" height="3.5" fill="#ff2020"/>
<path d="M907 820L907 838" stroke="#e8e8e8" stroke-width="1.2"/>
<path d="M957 820L957 838" stroke="#e8e8e8" stroke-width="1.2"/>
<path d="M903 826H900V833H903" stroke="#00e800" stroke-width="1.6" fill="none"/>
<path d="M962 829H966V836H962" stroke="#00e800" stroke-width="1.6" fill="none"/>
<path d="M925 808V804H932V808" stroke="#00e800" stroke-width="1.6" fill="none"/>
<path d="M925 840V845H934V840" stroke="#00e800" stroke-width="1.6" fill="none"/>
<path d="M902 821.5H918V835M932 821.5H946M969 821.5H951V835" stroke="#7090ff" stroke-width="1.2" fill="none"/>
<text x="902" y="820.3" fill="#7090ff" font-size="4.5" text-anchor="start" textLength="15" lengthAdjust="spacingAndGlyphs">说明配</text>
<text x="935" y="820.3" fill="#7090ff" font-size="4.5" text-anchor="start" textLength="11" lengthAdjust="spacingAndGlyphs">说明</text>
<text x="952" y="820.3" fill="#7090ff" font-size="4.5" text-anchor="start" textLength="17" lengthAdjust="spacingAndGlyphs">说明配</text>
<text x="898" y="831.6" fill="#e6e6e6" font-size="4" text-anchor="start" textLength="6" lengthAdjust="spacingAndGlyphs">说</text>
<text x="918" y="843.8" fill="#e6e6e6" font-size="4.5" text-anchor="start" textLength="22" lengthAdjust="spacingAndGlyphs">说明配筋</text>
<text x="928" y="802.6" fill="#e6e6e6" font-size="4" text-anchor="start" textLength="7" lengthAdjust="spacingAndGlyphs">说</text>
<text x="909" y="851.7" fill="#e8e070" font-size="5.5" text-anchor="start" textLength="37" lengthAdjust="spacingAndGlyphs">说明配筋详见</text>
<path d="M908 856.9L947.5 856.9" stroke="#e8e070" stroke-width="1.6"/>
<text x="905" y="864.5" fill="#7090ff" font-size="5" text-anchor="start" textLength="57" lengthAdjust="spacingAndGlyphs">说明配筋详见图纸要求施</text>
<text x="912" y="871.0" fill="#7090ff" font-size="5" text-anchor="start" textLength="58" lengthAdjust="spacingAndGlyphs">说明配筋详见图纸要求施</text>
<path d="M1005 802V824.6H1042.5V815.6M1008.5 803V821.3H1039V815.6" stroke="#e8e8e8" stroke-width="1.5" fill="none"/>
<path d="M1003 802.5H1010" stroke="#e8e8e8" stroke-width="1.5" fill="none"/>
<path d="M1006 824L991.0 832.0" stroke="#ff2020" stroke-width="1.3"/>
<path d="M1006 824L993.5 833.5" stroke="#ff2020" stroke-width="1.3"/>
<path d="M1006 824L996.0 835.0" stroke="#ff2020" stroke-width="1.3"/>
<path d="M1006 824L998.5 836.5" stroke="#ff2020" stroke-width="1.3"/>
<path d="M1006 824L1001.0 838.0" stroke="#ff2020" stroke-width="1.3"/>
<path d="M1006 824L1003.5 839.5" stroke="#ff2020" stroke-width="1.3"/>
<path d="M989 815V811.5H1005" stroke="#ff2020" stroke-width="1.6" fill="none"/>
<path d="M1029 823H1026V836H1029" stroke="#ff2020" stroke-width="1.6" fill="none"/>
<path d="M1010 826L1016 828L1012 843L1006 841Z" stroke="#64c84a" stroke-width="1.2" fill="none"/>
<path d="M982 838H992L1004 823" stroke="#7090ff" stroke-width="1.3" fill="none"/>
<text x="983" y="836.8" fill="#7090ff" font-size="4.5" text-anchor="start" textLength="8" lengthAdjust="spacingAndGlyphs">说</text>
<text x="1002" y="852.2" fill="#e8e070" font-size="5.5" text-anchor="start" textLength="28" lengthAdjust="spacingAndGlyphs">说明配筋详</text>
<path d="M1002 857L1030 857" stroke="#e8e070" stroke-width="1.6"/>
<text x="991" y="865.0" fill="#7090ff" font-size="5" text-anchor="start" textLength="60" lengthAdjust="spacingAndGlyphs">说明配筋详见图纸要求施工</text>
<circle cx="1013.5" cy="862.7" r="3.8" stroke="#7090ff" stroke-width="1" fill="#7090ff"/>
<rect x="1066.25" y="825" width="15.6" height="15" stroke="#e8e8e8" stroke-width="1.8" fill="none"/>
<rect x="1068" y="826.8" width="12" height="11.4" fill="#ff2020"/>
<path d="M1066.25 815V811.5H1081.9V815" stroke="#64c84a" stroke-width="1.3" fill="none"/>
<text x="1070" y="810.6" fill="#e6e6e6" font-size="4" text-anchor="start" textLength="8" lengthAdjust="spacingAndGlyphs">说明</text>
<path d="M1058 825H1054.5V840H1058" stroke="#64c84a" stroke-width="1.3" fill="none"/>
<text x="1049" y="834.6" fill="#e6e6e6" font-size="4" text-anchor="start" textLength="4" lengthAdjust="spacingAndGlyphs">说</text>
<path d="M1082 833H1107" stroke="#7090ff" stroke-width="1.3" fill="none"/>
<text x="1083" y="832.3" fill="#7090ff" font-size="4.5" text-anchor="start" textLength="17" lengthAdjust="spacingAndGlyphs">说明配</text>
<text x="1083" y="838.3" fill="#7090ff" font-size="4.5" text-anchor="start" textLength="21" lengthAdjust="spacingAndGlyphs">说明配筋</text>
<text x="1072.5" y="852" fill="#e8e070" font-size="6" text-anchor="middle">GZ1</text>
<path d="M1066 857L1080 857" stroke="#e8e070" stroke-width="1.6"/>
<text x="1060" y="863.92" fill="#7090ff" font-size="4.8" text-anchor="start" textLength="44" lengthAdjust="spacingAndGlyphs">说明配筋详见图纸要</text>
<rect x="1116.2" y="827.5" width="8.6" height="15.6" stroke="#e8e8e8" stroke-width="1.5" fill="none"/>
<rect x="1117.5" y="829" width="6" height="12.5" fill="#ff2020"/>
<path d="M1116.2 820V816H1124.8V820" stroke="#64c84a" stroke-width="1.3" fill="none"/>
<text x="1117" y="814.6" fill="#e6e6e6" font-size="4" text-anchor="start" textLength="7" lengthAdjust="spacingAndGlyphs">说</text>
<path d="M1128 827.5H1137.5V843H1128" stroke="#64c84a" stroke-width="1.3" fill="none"/>
<text x="1132" y="836.6" fill="#e6e6e6" font-size="4" text-anchor="start" textLength="4" lengthAdjust="spacingAndGlyphs">说</text>
<path d="M1124 827L1127 821H1152" stroke="#7090ff" stroke-width="1.3" fill="none"/>
<text x="1127" y="820.8" fill="#7090ff" font-size="4.5" text-anchor="start" textLength="21" lengthAdjust="spacingAndGlyphs">说明配筋</text>
<text x="1127" y="825.8" fill="#7090ff" font-size="4.5" text-anchor="start" textLength="21" lengthAdjust="spacingAndGlyphs">说明配筋</text>
<text x="1120.5" y="852" fill="#e8e070" font-size="6" text-anchor="middle">GZ2</text>
<path d="M1114 857L1128 857" stroke="#e8e070" stroke-width="1.6"/>
<path d="M1100 833H1107" stroke="#7090ff" stroke-width="1.3" fill="none"/>
<rect x="1171" y="824.8" width="30.8" height="15.6" stroke="#e8e8e8" stroke-width="1.8" fill="none"/>
<rect x="1173" y="826.6" width="27" height="12" fill="#ff2020"/>
<path d="M1186 827L1184 838" stroke="#e8e8e8" stroke-width="1" fill="none"/>
<path d="M1171 820V811.5H1201.8V820" stroke="#64c84a" stroke-width="1.3" fill="none"/>
<text x="1183" y="809.8" fill="#e6e6e6" font-size="4.5" text-anchor="start" textLength="7" lengthAdjust="spacingAndGlyphs">说</text>
<path d="M1165 825H1159V840H1165" stroke="#64c84a" stroke-width="1.3" fill="none"/>
<text x="1154" y="834.6" fill="#e6e6e6" font-size="4" text-anchor="start" textLength="4" lengthAdjust="spacingAndGlyphs">说</text>
<path d="M1202 833H1227" stroke="#7090ff" stroke-width="1.3" fill="none"/>
<text x="1203" y="831.8" fill="#7090ff" font-size="4.5" text-anchor="start" textLength="17" lengthAdjust="spacingAndGlyphs">说明配</text>
<text x="1203" y="838.8" fill="#7090ff" font-size="4.5" text-anchor="start" textLength="21" lengthAdjust="spacingAndGlyphs">说明配筋</text>
<text x="1186.5" y="852" fill="#e8e070" font-size="6" text-anchor="middle">GZ3</text>
<path d="M1180 857L1195 857" stroke="#e8e070" stroke-width="1.6"/>
<rect x="1232.4" y="787.6" width="112.7" height="60.3" stroke="#64c84a" stroke-width="1.5" fill="none"/>
<rect x="1234" y="789.2" width="109.5" height="57.1" stroke="#64c84a" stroke-width="0.8" fill="none"/>
<path d="M1255 787.6L1255 847.9" stroke="#64c84a" stroke-width="1.5"/>
<path d="M1299.7 787.6L1299.7 847.9" stroke="#64c84a" stroke-width="1.5"/>
<path d="M1232.4 799.8L1345.1 799.8" stroke="#64c84a" stroke-width="1.5"/>
<path d="M1232.4 812L1345.1 812" stroke="#64c84a" stroke-width="1.5"/>
<path d="M1232.4 824.2L1345.1 824.2" stroke="#64c84a" stroke-width="1.5"/>
<path d="M1232.4 836.1L1345.1 836.1" stroke="#64c84a" stroke-width="1.5"/>
<text x="1237" y="797.42" fill="#e6e6e6" font-size="4.8" text-anchor="start" textLength="13" lengthAdjust="spacingAndGlyphs">说明</text>
<text x="1262" y="797.42" fill="#e6e6e6" font-size="4.8" text-anchor="start" textLength="31" lengthAdjust="spacingAndGlyphs">说明配筋详见</text>
<text x="1306" y="797.42" fill="#e6e6e6" font-size="4.8" text-anchor="start" textLength="32" lengthAdjust="spacingAndGlyphs">说明配筋详见</text>
<text x="1237" y="809.42" fill="#e6e6e6" font-size="4.8" text-anchor="start" textLength="13" lengthAdjust="spacingAndGlyphs">120</text>
<text x="1262" y="809.42" fill="#e6e6e6" font-size="4.8" text-anchor="start" textLength="31" lengthAdjust="spacingAndGlyphs">说明配筋详见</text>
<text x="1306" y="809.42" fill="#e6e6e6" font-size="4.8" text-anchor="start" textLength="32" lengthAdjust="spacingAndGlyphs">说明配筋详见</text>
<text x="1237" y="821.42" fill="#e6e6e6" font-size="4.8" text-anchor="start" textLength="13" lengthAdjust="spacingAndGlyphs">100</text>
<text x="1262" y="821.42" fill="#e6e6e6" font-size="4.8" text-anchor="start" textLength="31" lengthAdjust="spacingAndGlyphs">说明配筋详见</text>
<text x="1306" y="821.42" fill="#e6e6e6" font-size="4.8" text-anchor="start" textLength="32" lengthAdjust="spacingAndGlyphs">说明配筋详见</text>
<text x="1237" y="833.42" fill="#e6e6e6" font-size="4.8" text-anchor="start" textLength="13" lengthAdjust="spacingAndGlyphs">90</text>
<text x="1262" y="833.42" fill="#e6e6e6" font-size="4.8" text-anchor="start" textLength="31" lengthAdjust="spacingAndGlyphs">说明配筋详见</text>
<text x="1306" y="833.42" fill="#e6e6e6" font-size="4.8" text-anchor="start" textLength="32" lengthAdjust="spacingAndGlyphs">说明配筋详见</text>
<text x="1237" y="844.92" fill="#e6e6e6" font-size="4.8" text-anchor="start" textLength="13" lengthAdjust="spacingAndGlyphs">80</text>
<text x="1262" y="844.92" fill="#e6e6e6" font-size="4.8" text-anchor="start" textLength="31" lengthAdjust="spacingAndGlyphs">说明配筋详见</text>
<text x="1306" y="844.92" fill="#e6e6e6" font-size="4.8" text-anchor="start" textLength="32" lengthAdjust="spacingAndGlyphs">说明配筋详见</text>
<text x="1272" y="853.2" fill="#e8e070" font-size="5.5" text-anchor="start" textLength="24" lengthAdjust="spacingAndGlyphs">说明配筋</text>
<path d="M1270 857L1293 857" stroke="#e8e070" stroke-width="1.6"/>
<text x="1256" y="864.5" fill="#7090ff" font-size="5" text-anchor="start" textLength="65" lengthAdjust="spacingAndGlyphs">说明配筋详见图纸要求施工混</text>
</svg>
<div class="t" style="left:912px;top:190px;font-size:44px;line-height:50px;color:#ff3b3b;letter-spacing:-0.5px">网页嵌入CS客户端程序</div>
<!-- search -->
<div class="a" style="left:1597px;top:176px;width:298px;height:38px;background:#161616"></div>
<div class="t" style="left:1609px;top:189px;font-size:13px;line-height:13px;color:#8c8c8c">请输入文本</div>
<svg class="a" style="left:1736px;top:187px" width="22" height="20"><circle cx="9" cy="9" r="6.2" fill="none" stroke="#a4a4a4" stroke-width="2.6"/><path d="M13.5 13.5L18 18" stroke="#a4a4a4" stroke-width="2.8"/></svg>
<div class="a" style="left:1762px;top:184px;width:1px;height:24px;background:#6c6c6c"></div>
<div class="t" style="left:1772px;top:189px;font-size:14px;line-height:14px;color:#e6e6e6;font-weight:bold">0/0</div>
<svg class="a" style="left:1830px;top:191px" width="50" height="12"><path d="M2 10L8.5 3.5L15 10" fill="none" stroke="#b0b0b0" stroke-width="2"/><path d="M33 3L39.5 9.5L46 3" fill="none" stroke="#b0b0b0" stroke-width="2"/></svg>
<!-- model -->
<div class="a" style="left:333px;top:940px;width:180px;height:50px;background:#161616"></div>
<div class="t" style="left:351px;top:961px;font-size:16.5px;line-height:17px;color:#a8a8a8">Model</div>
<svg class="a" style="left:498px;top:961px" width="10" height="7"><path d="M0.5 0.5H8.5L4.5 6Z" fill="#a4a4a4"/></svg>
<!-- toolbar -->
<div class="a" style="left:910px;top:940px;width:408px;height:50px;background:#161616"></div>
<svg class="a" style="left:910px;top:940px" width="408" height="50">
 <g fill="#a4a4a4" stroke="#a4a4a4">
  <path d="M12.5 24L25.8 12.4L39.3 24H35.5V36.6H29V28.5H22.5V36.6H16V24Z" stroke="none"/>
  <g fill="none" stroke-width="1.1"><path d="M85.2 23.5V15.7H69.6V30H77"/><circle cx="81.9" cy="28" r="4.6"/><path d="M85.2 31.3L88.6 34.7" stroke-width="1.4"/></g>
  <g fill="none" stroke-width="1.5"><rect x="116.5" y="21" width="24.2" height="9"/><path d="M119.3 21V24.2M122.1 21V24.2M124.9 21V24.2M128.6 21V26.2M131.4 21V24.2M134.2 21V24.2M137 21V24.2" stroke-width="1"/></g>
  <g fill="none" stroke-width="1.3"><path d="M173.4 17V37.8M183.5 33V37.8M166.5 22.5H176M166.5 31.4H190.6"/></g>
  <path d="M183.5 12C179 12 175.8 15.3 175.8 19.4C175.8 23.5 183.5 31.8 183.5 31.8C183.5 31.8 191.2 23.5 191.2 19.4C191.2 15.3 188 12 183.5 12ZM183.5 15.2A3.6 3.6 0 1 0 183.51 15.2Z" stroke="none" fill-rule="evenodd"/>
  <g fill="none" stroke-width="1.2"><path d="M18 19.6L30 14.9L42 19.6L30 24.3Z" transform="translate(200,0)"/><path d="M218 24.8L230 29.5L242 24.8L239 23.6M218 24.8L221 23.6"/><path d="M218 29.8L230 34.5L242 29.8L239 28.6M218 29.8L221 28.6"/></g>
  <g fill="none" stroke-width="1.2"><path d="M270.5 29.3V16.4H288.5V18.5M270.5 29.3H274.5"/><rect x="275.5" y="21.5" width="17.4" height="13"/><path d="M289.2 21.5V34.5M289.2 24.3H292.9M289.2 27.3H292.9"/></g>
  <path d="M341.17 21.96L344.30 22.05L344.30 27.55L341.17 27.64L340.49 29.28L342.64 31.55L338.75 35.44L336.48 33.29L334.84 33.97L334.75 37.10L329.25 37.10L329.16 33.97L327.52 33.29L325.25 35.44L321.36 31.55L323.51 29.28L322.83 27.64L319.70 27.55L319.70 22.05L322.83 21.96L323.51 20.32L321.36 18.05L325.25 14.16L327.52 16.31L329.16 15.63L329.25 12.50L334.75 12.50L334.84 15.63L336.48 16.31L338.75 14.16L342.64 18.05L340.49 20.32ZM336.6 24.8A4.6 4.6 0 1 0 327.4 24.8A4.6 4.6 0 1 0 336.6 24.8Z" stroke="none" fill-rule="evenodd"/>
  <g fill="none" stroke-width="1.5"><rect x="370.6" y="13" width="25.2" height="24.2"/></g>
  <g fill="none" stroke-width="1.2"><path d="M373.8 33.8L381.5 26.1M384.8 22.8L392.4 15.2M385.2 15.2H392.4V22.4M373.8 26.8V33.8H380.8"/></g>
 </g>
</svg>
</div>
</div>

<div class="a" style="left:1917px;top:96px;width:3px;height:917px;background:#f0f0f0"></div>
<!-- red frame -->
<div class="a" style="left:309px;top:125px;width:1598px;height:875px;border:3px solid #ff2f2f"></div>
<!-- status bar -->
<div class="a" style="left:2px;top:1016px;width:1829px;height:1px;background:#5d80be"></div>
<div class="a" style="left:0;top:1017px;width:1920px;height:23px;background:linear-gradient(#d3e4fa,#cfe1f9 30%,#b8d5f6 35%,#c4daf7 70%,#d2e4fa)"></div>
<div class="a" style="left:1831px;top:1013px;width:89px;height:8px;background:#e4ebf5;border-radius:8px 0 0 0"></div>
<div class="a" style="left:1845px;top:1020px;width:60px;height:15px;background:#95b4e0"></div>
<div class="a" style="left:1845px;top:1020px;width:15px;height:15px;background:#8aa8d6"></div><div class="a" style="left:1890px;top:1020px;width:15px;height:15px;background:#8eacd8"></div>
</body></html>
